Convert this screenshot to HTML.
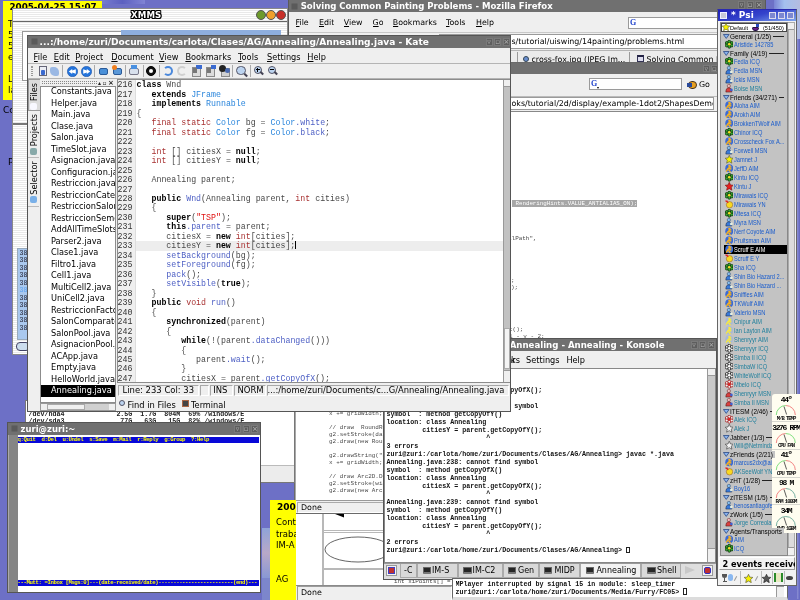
<!DOCTYPE html><html><head><meta charset="utf-8"><title>Desktop</title><style>
*{box-sizing:border-box;margin:0;padding:0}
html,body{width:800px;height:600px;overflow:hidden}
body{background:#6d70c6;position:relative;font-family:"DejaVu Sans","Liberation Sans",sans-serif;font-size:8.3px;color:#000}
.a{position:absolute;white-space:pre;overflow:hidden}
.win{position:absolute;overflow:hidden;background:#efefef;border:1px solid #5a5a5a}
.tb{position:absolute;left:0;right:0;top:0;background:#707070;color:#fff;font-weight:bold;white-space:pre;overflow:hidden}
.mono{font-family:"Liberation Mono","DejaVu Sans Mono",monospace}
.ui{font-family:"DejaVu Sans","Liberation Sans",sans-serif}
.psi{font-family:"Liberation Sans","DejaVu Sans",sans-serif}
u{text-decoration:underline}
.wb{position:absolute;width:7px;height:7px;background:#5c5c5c;border:1px solid #888;top:2px}
</style></head><body><div id="desk" style="position:absolute;left:0;top:0;width:800px;height:600px;overflow:hidden;will-change:transform">
<div class="a" style="left:774px;top:0;width:26px;height:9px;background:linear-gradient(90deg,#7a84d4,#a4c0ee 40%,#b4bce0)"></div>
<div class="a" style="left:797px;top:9px;width:3px;height:30px;background:#b0bce4"></div>
<div class="a" style="left:797px;top:39px;width:3px;height:560px;background:linear-gradient(90deg,#8c90d4,#6064c0)"></div>
<div class="a" style="left:100px;top:0;width:45px;height:4px;background:linear-gradient(90deg,#7a7ed0,#5c60c0,#8084d4)"></div>
<div class="a" style="left:3px;top:105px;font-size:9px">Co</div>
<div class="a" style="left:8px;top:157px;font-size:9px">P</div>
<div class="a" style="left:3px;top:1px;width:99px;height:99px;background:#ffff00">
<div class="a" style="left:6.4px;top:1.2px;font-size:8.8px;font-weight:bold;line-height:11px">2005-04-25 15:07</div>
<div class="a" style="left:5px;top:18px;font-size:9px;line-height:11px">T</div>
<div class="a" style="left:5px;top:29px;font-size:9px;line-height:11px">5</div>
<div class="a" style="left:5px;top:40px;font-size:9px;line-height:11px">5</div>
<div class="a" style="left:5px;top:51px;font-size:9px;line-height:11px">e</div>
<div class="a" style="left:5px;top:62px;font-size:9px;line-height:11px"></div>
<div class="a" style="left:5px;top:73px;font-size:9px;line-height:11px">L</div>
<div class="a" style="left:5px;top:84px;font-size:9px;line-height:11px">la</div>
</div>
<div class="a" style="left:12px;top:8px;width:276px;height:347px;border:1px solid #8a8a8a;background:repeating-linear-gradient(#fff 0,#fff 1px,#e9e9e9 1px,#e9e9e9 2px)">
<div class="a" style="left:0;top:12px;width:276px;height:1px;background:#666"></div>
<div class="a" style="left:0;top:114px;width:276px;height:2px;background:#777"></div>
<div class="a" style="left:118px;top:-0.5px;font-size:8.6px;font-weight:bold;color:#fff;text-shadow:-1px 0 #000,1px 0 #000,0 -1px #000,0 1px #000,1px 1px #000,-1px -1px #000,1px -1px #000,-1px 1px #000;line-height:12px;letter-spacing:0.1px;overflow:visible">XMMS</div>
<div class="a" style="left:243px;top:1px;width:10px;height:10px;border-radius:5px;background:#6d9a2b;border:1px solid #555"></div>
<div class="a" style="left:253px;top:1px;width:10px;height:10px;border-radius:5px;background:#f0a02c;border:1px solid #555"></div>
<div class="a" style="left:263px;top:1px;width:10px;height:10px;border-radius:5px;background:#c8302a;border:1px solid #555"></div>
<div class="a" style="left:9px;top:22px;width:100px;height:50px;background:#fff;border:1px solid #999"></div>
<div class="a" style="left:108px;top:21px;width:160px;height:60px;background:#8eaede"></div>
<div class="a" style="left:4px;top:238.5px;width:80px;height:92px;background:#a9c8ee;border:1px solid #9ab"></div>
<div class="a mono" style="left:6.5px;top:240.5px;font-size:6.6px;line-height:7.5px;color:#223">38:</div>
<div class="a mono" style="left:6.5px;top:248.0px;font-size:6.6px;line-height:7.5px;color:#223">38:</div>
<div class="a mono" style="left:6.5px;top:255.5px;font-size:6.6px;line-height:7.5px;color:#223">38:</div>
<div class="a mono" style="left:6.5px;top:263.0px;font-size:6.6px;line-height:7.5px;color:#223">38:</div>
<div class="a mono" style="left:6.5px;top:270.5px;font-size:6.6px;line-height:7.5px;color:#223">38:</div>
<div class="a mono" style="left:6.5px;top:278.0px;font-size:6.6px;line-height:7.5px;color:#5aa0f0">38:</div>
<div class="a mono" style="left:6.5px;top:285.5px;font-size:6.6px;line-height:7.5px;color:#223">38:</div>
<div class="a mono" style="left:6.5px;top:293.0px;font-size:6.6px;line-height:7.5px;color:#223">38:</div>
<div class="a mono" style="left:6.5px;top:300.5px;font-size:6.6px;line-height:7.5px;color:#223">38:</div>
<div class="a mono" style="left:6.5px;top:308.0px;font-size:6.6px;line-height:7.5px;color:#223">38:</div>
<div class="a mono" style="left:6.5px;top:315.5px;font-size:6.6px;line-height:7.5px;color:#223">38:</div>
<div class="a" style="left:3px;top:333px;width:14px;height:8.5px;border:1px solid #446;border-radius:4px;background:#cde"></div>
</div>
<div class="win" style="left:288px;top:0;width:478px;height:120px;border-top:none">
<div class="tb" style="height:12px;font-size:8.55px;line-height:12px"><div class="a" style="left:2px;top:3px;width:7px;height:7px;background:#5a5a5a;border:1px solid #646464;border-radius:1.5px"></div><span style="position:absolute;left:11.7px;top:-0.5px">Solving Common Painting Problems - Mozilla Firefox</span><div class="a" style="left:466.0px;top:1px;width:7px;height:8px;background:#5e5e5e;border:1px solid #7a7a7a;color:#b8b8b8;font-size:7px;line-height:6px;text-align:center;font-weight:normal">×</div><div class="a" style="left:457.5px;top:1px;width:7px;height:8px;background:#5e5e5e;border:1px solid #7a7a7a;color:#b8b8b8;font-size:7px;line-height:6px;text-align:center;font-weight:normal">▫</div><div class="a" style="left:449.0px;top:1px;width:7px;height:8px;background:#5e5e5e;border:1px solid #7a7a7a;color:#b8b8b8;font-size:7px;line-height:6px;text-align:center;font-weight:normal">▿</div></div>
<div class="a" style="left:6.5px;top:17px;font-size:7.9px;line-height:11px"><u>F</u>ile</div>
<div class="a" style="left:30px;top:17px;font-size:7.9px;line-height:11px"><u>E</u>dit</div>
<div class="a" style="left:54.80000000000001px;top:17px;font-size:7.9px;line-height:11px"><u>V</u>iew</div>
<div class="a" style="left:83.5px;top:17px;font-size:7.9px;line-height:11px"><u>G</u>o</div>
<div class="a" style="left:103.80000000000001px;top:17px;font-size:7.9px;line-height:11px"><u>B</u>ookmarks</div>
<div class="a" style="left:157px;top:17px;font-size:7.9px;line-height:11px"><u>T</u>ools</div>
<div class="a" style="left:187px;top:17px;font-size:7.9px;line-height:11px"><u>H</u>elp</div>
<div class="a" style="left:339px;top:16.5px;width:110px;height:12px;background:#fff;border:1px solid #9a9a9a"></div>
<div class="a" style="left:341px;top:18px;font-size:8px;line-height:9px;color:#2244cc;font-weight:bold;font-family:'Liberation Serif',serif">G</div>
<div class="a" style="left:0;top:32px;width:478px;height:1px;background:#c8c8c8"></div>
<div class="a" style="left:150px;top:34px;width:320px;height:15px;background:#fff;border:1px solid #9a9a9a"></div>
<div class="a" style="left:222.5px;top:36px;font-size:7.9px;line-height:12px">s/tutorial/uiswing/14painting/problems.html</div>
<div class="a" style="left:0;top:50px;width:478px;height:13px;background:#ebebeb;border-top:1px solid #b4b4b4"></div>
<div class="a" style="left:227.5px;top:52px;width:1px;height:11px;background:#999"></div>
<div class="a" style="left:234px;top:55.5px;width:6px;height:6px;border-radius:3px;background:#6a8fd0;border:1px solid #345"></div>
<div class="a" style="left:242.5px;top:53.7px;font-size:7.9px;line-height:12px">cross-fox.jpg (JPEG Im...</div>
<div class="a" style="left:340px;top:52px;width:1px;height:11px;background:#999"></div>
<div class="a" style="left:348px;top:54.5px;width:7px;height:7px;background:#dde;border:1px solid #335;border-top:2px solid #224"></div>
<div class="a" style="left:357.5px;top:53.7px;font-size:7.9px;line-height:12px">Solving Common Painting Problems</div>
</div>
<div class="a" style="left:294px;top:500px;width:160px;height:100px;background:#fff;border-left:2px solid #6c6c6c"><div class="a" style="left:-1px;top:0;width:1px;height:100px;background:#a8a8a8"></div>
<div class="a" style="left:25.5px;top:13px;width:2.4px;height:72px;border-left:1px solid #b8b8b8;border-right:1px solid #b8b8b8"></div>
<div class="a" style="left:27px;top:30px;width:70px;height:2.6px;border-top:1px solid #b8b8b8;border-bottom:1px solid #b8b8b8"></div>
<div class="a" style="left:27px;top:67.5px;width:70px;height:2.6px;border-top:1px solid #b8b8b8;border-bottom:1px solid #b8b8b8"></div>
<svg class="a" style="left:27.5px;top:13px" width="70" height="60" viewBox="0 0 70 60"><polygon points="8.5,0 20,0 20,4.5" fill="#000"/><ellipse cx="34" cy="36.5" rx="33" ry="12.5" fill="#fff" stroke="#222" stroke-width="0.7"/></svg>
<div class="a mono" style="left:98px;top:77.5px;font-size:5.9px;line-height:7px;color:#444">int xiPoints[] = {</div>
<div class="a" style="left:0;top:84.5px;width:160px;height:16px;background:#efefef;border-top:1px solid #8a8a8a"></div>
<div class="a" style="left:0.5px;top:86px;width:155.5px;height:15px;border:1px solid #9c9c9c;border-right-color:#fff"></div>
<div class="a" style="left:5px;top:87px;font-size:7.9px;line-height:12px">Done</div>
</div>
<div class="win" style="left:294px;top:62px;width:440px;height:452px;border-color:#6a6a6a">
<div class="tb" style="height:11px"><div class="a" style="left:424.0px;top:1.5px;width:6.5px;height:7.5px;background:#5e5e5e;border:1px solid #7a7a7a;color:#b8b8b8;font-size:7px;line-height:6px;text-align:center;font-weight:normal">×</div><div class="a" style="left:416.0px;top:1.5px;width:6.5px;height:7.5px;background:#5e5e5e;border:1px solid #7a7a7a;color:#b8b8b8;font-size:7px;line-height:6px;text-align:center;font-weight:normal">▫</div><div class="a" style="left:408.0px;top:1.5px;width:6.5px;height:7.5px;background:#5e5e5e;border:1px solid #7a7a7a;color:#b8b8b8;font-size:7px;line-height:6px;text-align:center;font-weight:normal">▿</div></div>
<div class="a" style="left:294px;top:14.7px;width:93px;height:12px;background:#fff;border:1px solid #9a9a9a"></div>
<div class="a" style="left:296px;top:15.7px;font-size:8px;line-height:10px;color:#2244cc;font-weight:bold;font-family:'Liberation Serif',serif">G</div>
<div class="a" style="left:393px;top:17.5px;width:9px;height:8px;border-radius:4px;background:#e8a020;border:1px solid #432"></div><div class="a" style="left:392px;top:19.5px;width:5px;height:4px;background:#2a4a9a"></div><div class="a" style="left:301.5px;top:24px;width:0;height:0;border-top:2px solid #000;border-left:1.5px solid transparent;border-right:1.5px solid transparent"></div>
<div class="a" style="left:404px;top:15px;font-size:7.9px;line-height:13px">Go</div>
<div class="a" style="left:0;top:33px;width:440px;height:1px;background:#bbb"></div>
<div class="a" style="left:150px;top:33.6px;width:269px;height:13px;background:#fff;border:1px solid #9a9a9a"></div>
<div class="a" style="left:216.5px;top:34.5px;width:201px;font-size:7.9px;line-height:12px">oks/tutorial/2d/display/example-1dot2/ShapesDemo2D.java</div>
<div class="a" style="left:0;top:48px;width:440px;height:1px;background:#888"></div>
<div class="a" style="left:1px;top:49px;width:421px;height:389px;background:#fff"></div>
<div class="a mono" style="left:217px;top:136.5px;font-size:5.8px;line-height:7.5px;background:#a6a6a6;color:#fff"> RenderingHints.VALUE_ANTIALIAS_ON);</div>
<div class="a mono" style="left:213px;top:171.5px;font-size:5.95px;line-height:7px;color:#4a4a4a">alPath",</div>
<div class="a mono" style="left:216px;top:213.5px;font-size:5.95px;line-height:7px;color:#4a4a4a">;</div>
<div class="a mono" style="left:216px;top:220.5px;font-size:5.95px;line-height:7px;color:#4a4a4a">);</div>
<div class="a mono" style="left:214px;top:262.5px;font-size:5.95px;line-height:7px;color:#4a4a4a">t();</div>
<div class="a mono" style="left:214px;top:269.5px;font-size:5.95px;line-height:7px;color:#4a4a4a">1 - y - 2;</div>
<div class="a mono" style="left:34px;top:346.5px;font-size:5.95px;line-height:7px;color:#4a4a4a">x += gridWidth;</div>
<div class="a mono" style="left:34px;top:360.5px;font-size:5.95px;line-height:7px;color:#4a4a4a">// draw  RoundRectangle2D</div>
<div class="a mono" style="left:34px;top:367.5px;font-size:5.95px;line-height:7px;color:#4a4a4a">g2.setStroke(dashed);</div>
<div class="a mono" style="left:34px;top:374.5px;font-size:5.95px;line-height:7px;color:#4a4a4a">g2.draw(new RoundRectangle2D</div>
<div class="a mono" style="left:34px;top:388.5px;font-size:5.95px;line-height:7px;color:#4a4a4a">g2.drawString("RoundRectangle2D"</div>
<div class="a mono" style="left:34px;top:395.5px;font-size:5.95px;line-height:7px;color:#4a4a4a">x += gridWidth;</div>
<div class="a mono" style="left:34px;top:409.5px;font-size:5.95px;line-height:7px;color:#4a4a4a">// draw Arc2D.Double</div>
<div class="a mono" style="left:34px;top:416.5px;font-size:5.95px;line-height:7px;color:#4a4a4a">g2.setStroke(wideStroke);</div>
<div class="a mono" style="left:34px;top:423.5px;font-size:5.95px;line-height:7px;color:#4a4a4a">g2.draw(new Arc2D.Double</div>
<div class="a" style="left:0;top:437px;width:440px;height:14px;background:#efefef;border-top:1px solid #999"></div>
<div class="a" style="left:2px;top:439px;width:160px;height:11px;border:1px solid #aaa;border-right-color:#fff;border-bottom-color:#fff"></div>
<div class="a" style="left:6px;top:438.5px;font-size:7.9px;line-height:12px">Done</div>
<div class="a" style="left:0;top:0;width:1px;height:452px;background:#a8a8a8"></div>
</div>
<div class="a" style="left:25px;top:400px;width:270px;height:83px;background:#fff;border:1px solid #777">
<div class="a mono" style="left:2.5px;top:9.6px;font-size:6.67px;line-height:7.5px;color:#222;font-weight:bold">/dev/hda4             2.5G  1.7G  804M  69% /windows/E
/dev/sda3              77G   63G   15G  82% /windows/F</div>
<div class="a" style="left:0;top:64px;width:270px;height:18px;background:#ececec;border-top:1px solid #bbb"></div>
</div>
<div class="a" style="left:270px;top:500px;width:26px;height:100px;background:#ffff00">
<div class="a" style="left:7px;top:2.3px;font-size:9px;font-weight:bold;line-height:11px">2005</div>
<div class="a" style="left:6px;top:17.3px;font-size:8.5px;line-height:11px">Cont</div>
<div class="a" style="left:6px;top:28.55px;font-size:8.5px;line-height:11px">traba</div>
<div class="a" style="left:6px;top:39.8px;font-size:8.5px;line-height:11px">IM-A</div>
<div class="a" style="left:6px;top:51.05px;font-size:8.5px;line-height:11px"></div>
<div class="a" style="left:6px;top:62.3px;font-size:8.5px;line-height:11px"></div>
<div class="a" style="left:6px;top:73.55px;font-size:8.5px;line-height:11px">AG</div>
</div>
<div class="a" style="left:262px;top:528px;width:8px;height:50px;background:linear-gradient(#8fa4d8,#b8a8c8,#8898d4)"></div>
<div class="a" style="left:262px;top:578px;width:8px;height:22px;background:#7c86cc"></div>
<div class="win" style="left:383px;top:338px;width:334px;height:242px;border-color:#555">
<div class="tb" style="height:12px;font-size:8.6px;line-height:12px"><span style="position:absolute;right:51.5px;top:-0.3px">zuri@zuri:/carlota/home/zuri/Documents/Clases/AG/Annealing - Annealing - Konsole</span><div class="a" style="left:323.5px;top:2px;width:7px;height:8px;background:#5e5e5e;border:1px solid #7a7a7a;color:#b8b8b8;font-size:7px;line-height:6px;text-align:center;font-weight:normal">×</div><div class="a" style="left:315.0px;top:2px;width:7px;height:8px;background:#5e5e5e;border:1px solid #7a7a7a;color:#b8b8b8;font-size:7px;line-height:6px;text-align:center;font-weight:normal">▫</div><div class="a" style="left:306.5px;top:2px;width:7px;height:8px;background:#5e5e5e;border:1px solid #7a7a7a;color:#b8b8b8;font-size:7px;line-height:6px;text-align:center;font-weight:normal">▿</div></div>
<div class="a" style="left:127px;top:14.5px;font-size:8.2px;line-height:12px">ks</div>
<div class="a" style="left:142px;top:14.5px;font-size:8.2px;line-height:12px">Settings</div>
<div class="a" style="left:182.39999999999998px;top:14.5px;font-size:8.2px;line-height:12px">Help</div>
<div class="a" style="left:5px;top:14.5px;font-size:8.2px;line-height:12px">Session   Edit   View   Bookmar</div>
<div class="a" style="left:0;top:29px;width:332px;height:195px;background:#fff;border:1px solid #888"></div>
<div class="a" style="left:323px;top:30px;width:8px;height:193px;background:#c8c8c8;border-left:1px solid #999"></div>
<div class="a" style="left:324px;top:30px;width:7px;height:7px;background:#efefef;border-bottom:1px solid #999"></div>
<div class="a" style="left:324px;top:209px;width:7px;height:14px;background:#efefef;border-top:1px solid #999"></div>
<div class="a mono" style="left:2.3999999999999773px;top:47.19999999999999px;width:318px;font-size:6.67px;line-height:8px;font-weight:bold;color:#111">         citiesX = parent.getCopyOfX();
                         ^
Annealing.java:239: cannot find symbol
symbol  : method getCopyOfY()
location: class Annealing
         citiesY = parent.getCopyOfY();
                         ^
3 errors
zuri@zuri:/carlota/home/zuri/Documents/Clases/AG/Annealing&gt; javac *.java
Annealing.java:238: cannot find symbol
symbol  : method getCopyOfX()
location: class Annealing
         citiesX = parent.getCopyOfX();
                         ^
Annealing.java:239: cannot find symbol
symbol  : method getCopyOfY()
location: class Annealing
         citiesY = parent.getCopyOfY();
                         ^
2 errors
zuri@zuri:/carlota/home/zuri/Documents/Clases/AG/Annealing&gt; <span style="display:inline-block;width:3.5px;height:6.5px;border:1px solid #222;vertical-align:-1px"></span></div>
<div class="a" style="left:0;top:224px;width:332px;height:17px;background:#dedede;border-top:1px solid #999"></div>
<div class="a" style="left:2px;top:226px;width:11px;height:11px;background:#f4f4f4;border:1px solid #999"></div><div class="a" style="left:4px;top:228px;width:7px;height:7px;background:#c03030;border:1px solid #4040c0"></div>
<div class="a" style="left:16px;top:224.5px;width:17px;height:14.5px;background:#d9d9d9;border:1px solid #aaa;border-top:none"></div>
<div class="a" style="left:20px;top:226.29999999999995px;font-size:8px;line-height:12px">-C</div>
<div class="a" style="left:33px;top:224.5px;width:41px;height:14.5px;background:#d9d9d9;border:1px solid #aaa;border-top:none"></div>
<div class="a" style="left:38.5px;top:228px;width:8.5px;height:7px;background:#262626;border:1px solid #666;border-bottom:2px solid #777;border-radius:1px"></div>
<div class="a" style="left:48px;top:226.29999999999995px;font-size:8px;line-height:12px">IM-S</div>
<div class="a" style="left:74px;top:224.5px;width:45px;height:14.5px;background:#d9d9d9;border:1px solid #aaa;border-top:none"></div>
<div class="a" style="left:79px;top:228px;width:8.5px;height:7px;background:#262626;border:1px solid #666;border-bottom:2px solid #777;border-radius:1px"></div>
<div class="a" style="left:88.60000000000002px;top:226.29999999999995px;font-size:8px;line-height:12px">IM-C2</div>
<div class="a" style="left:119px;top:224.5px;width:36px;height:14.5px;background:#d9d9d9;border:1px solid #aaa;border-top:none"></div>
<div class="a" style="left:123.5px;top:228px;width:8.5px;height:7px;background:#262626;border:1px solid #666;border-bottom:2px solid #777;border-radius:1px"></div>
<div class="a" style="left:134px;top:226.29999999999995px;font-size:8px;line-height:12px">Gen</div>
<div class="a" style="left:155px;top:224.5px;width:41px;height:14.5px;background:#d9d9d9;border:1px solid #aaa;border-top:none"></div>
<div class="a" style="left:159.60000000000002px;top:228px;width:8.5px;height:7px;background:#262626;border:1px solid #666;border-bottom:2px solid #777;border-radius:1px"></div>
<div class="a" style="left:170.39999999999998px;top:226.29999999999995px;font-size:8px;line-height:12px">MIDP</div>
<div class="a" style="left:196px;top:224.5px;width:61px;height:14.5px;background:#f2f2f2;border:1px solid #aaa;border-top:none"></div>
<div class="a" style="left:201.5px;top:228px;width:8.5px;height:7px;background:#262626;border:1px solid #666;border-bottom:2px solid #777;border-radius:1px"></div>
<div class="a" style="left:212.39999999999998px;top:226.29999999999995px;font-size:8px;line-height:12px">Annealing</div>
<div class="a" style="left:257px;top:224.5px;width:40px;height:14.5px;background:#d9d9d9;border:1px solid #aaa;border-top:none"></div>
<div class="a" style="left:263px;top:228px;width:8.5px;height:7px;background:#262626;border:1px solid #666;border-bottom:2px solid #777;border-radius:1px"></div>
<div class="a" style="left:273px;top:226.29999999999995px;font-size:8px;line-height:12px">Shell</div>
<div class="a" style="left:301px;top:227px;width:0;height:0;border-left:10px solid #c8c8c8;border-top:4.5px solid transparent;border-bottom:4.5px solid transparent"></div>
<div class="a" style="left:318px;top:225.5px;width:11px;height:11px;background:#f4f4f4;border:1px solid #999"></div><div class="a" style="left:320px;top:227.5px;width:7px;height:7px;background:#c03030;border:1px solid #3030c0;border-radius:2px"></div>
</div>
<div class="win" style="left:27px;top:35px;width:484px;height:377px;border-color:#555">
<div class="tb" style="height:12px;font-size:9.07px;line-height:12px"><div class="a" style="left:3px;top:2px;width:7px;height:7px;background:#5a5a5a;border:1px solid #646464;border-radius:1.5px"></div><span style="position:absolute;left:11.6px;top:0.2px">...:/home/zuri/Documents/carlota/Clases/AG/Annealing/Annealing.java - Kate</span><div class="a" style="left:474.5px;top:2px;width:7px;height:8px;background:#5e5e5e;border:1px solid #7a7a7a;color:#b8b8b8;font-size:7px;line-height:6px;text-align:center;font-weight:normal">×</div><div class="a" style="left:466.0px;top:2px;width:7px;height:8px;background:#5e5e5e;border:1px solid #7a7a7a;color:#b8b8b8;font-size:7px;line-height:6px;text-align:center;font-weight:normal">▫</div><div class="a" style="left:457.5px;top:2px;width:7px;height:8px;background:#5e5e5e;border:1px solid #7a7a7a;color:#b8b8b8;font-size:7px;line-height:6px;text-align:center;font-weight:normal">▿</div></div>
<div class="a" style="left:5.600000000000001px;top:14.700000000000003px;font-size:8.2px;line-height:12px"><u>F</u>ile</div>
<div class="a" style="left:25.799999999999997px;top:14.700000000000003px;font-size:8.2px;line-height:12px"><u>E</u>dit</div>
<div class="a" style="left:47.2px;top:14.700000000000003px;font-size:8.2px;line-height:12px"><u>P</u>roject</div>
<div class="a" style="left:83.3px;top:14.700000000000003px;font-size:8.2px;line-height:12px"><u>D</u>ocument</div>
<div class="a" style="left:131px;top:14.700000000000003px;font-size:8.2px;line-height:12px"><u>V</u>iew</div>
<div class="a" style="left:157.4px;top:14.700000000000003px;font-size:8.2px;line-height:12px"><u>B</u>ookmarks</div>
<div class="a" style="left:210px;top:14.700000000000003px;font-size:8.2px;line-height:12px"><u>T</u>ools</div>
<div class="a" style="left:239px;top:14.700000000000003px;font-size:8.2px;line-height:12px"><u>S</u>ettings</div>
<div class="a" style="left:279.3px;top:14.700000000000003px;font-size:8.2px;line-height:12px"><u>H</u>elp</div>
<div class="a" style="left:0;top:27px;width:484px;height:1px;background:#b4b4b4"></div>
<div class="a" style="left:0;top:42px;width:484px;height:1px;background:#b4b4b4"></div>
<div class="a" style="left:3px;top:30px;width:2px;height:10px;border-left:1px dotted #999;border-right:1px dotted #999"></div>
<div class="a" style="left:33.5px;top:29px;width:1px;height:12px;background:#aaa"></div>
<div class="a" style="left:66px;top:29px;width:1px;height:12px;background:#aaa"></div>
<div class="a" style="left:97px;top:29px;width:1px;height:12px;background:#aaa"></div>
<div class="a" style="left:114.5px;top:29px;width:1px;height:12px;background:#aaa"></div>
<div class="a" style="left:131px;top:29px;width:1px;height:12px;background:#aaa"></div>
<div class="a" style="left:204px;top:29px;width:1px;height:12px;background:#aaa"></div>
<div class="a" style="left:222px;top:29px;width:1px;height:12px;background:#aaa"></div>
<div class="a" style="left:10.5px;top:30px;width:8px;height:10px;background:#eceef4;border:1px solid #667"></div>
<div class="a" style="left:12.5px;top:33.5px;width:4.5px;height:5px;background:#3a6ad0;border-radius:1px"></div>
<div class="a" style="left:21.5px;top:31px;width:9px;height:9px;background:#9ab8e4;border-radius:2px 5px 2px 5px"></div>
<svg class="a" style="left:38.5px;top:29.5px" width="11" height="11" viewBox="0 0 11 11"><circle cx="5.5" cy="5.5" r="5.2" fill="#2474dc" stroke="#1a4a9a" stroke-width="0.5"/><polygon points="1.8,5.5 5.2,3 5.2,4.4 8.8,3.2 8.8,7.8 5.2,6.6 5.2,8" fill="#fff"/></svg>
<svg class="a" style="left:52.5px;top:29.5px" width="11" height="11" viewBox="0 0 11 11"><circle cx="5.5" cy="5.5" r="5.2" fill="#2474dc" stroke="#1a4a9a" stroke-width="0.5"/><polygon points="9.2,5.5 5.8,3 5.8,4.4 2.2,3.2 2.2,7.8 5.8,6.6 5.8,8" fill="#fff"/></svg>
<div class="a" style="left:70.5px;top:32px;width:9px;height:7px;background:#4a90d8;border-radius:2px;border:1px solid #2a5a98"></div>
<div class="a" style="left:84.5px;top:32px;width:9px;height:7px;background:#5a98d8;border-radius:2px;border:1px solid #2a5a98"></div><div class="a" style="left:84px;top:29px;width:5px;height:5px;background:#f08020;border-radius:3px"></div>
<div class="a" style="left:101px;top:32px;width:10px;height:7px;background:#d8e0ec;border:1px solid #778;border-radius:2px"></div><div class="a" style="left:103px;top:29px;width:6px;height:4px;background:#4a90e0"></div>
<div class="a" style="left:118px;top:30px;width:10px;height:10px;border-radius:5.0px;background:#111;border:1px solid #000"></div>
<div class="a" style="left:121px;top:33px;width:4px;height:4px;background:#fff;border-radius:2px"></div>
<div class="a" style="left:134.5px;top:29.5px;width:10.5px;height:10.5px;border-radius:5.5px;border:2px solid #4a88dc;border-left-color:transparent"></div>
<div class="a" style="left:149px;top:29.5px;width:10px;height:10.5px;border-radius:5.5px;border:2px solid #d0d0d0;border-right-color:transparent"></div>
<div class="a" style="left:163.5px;top:30.5px;width:9px;height:10px;background:#dcdcdc;border:1px solid #8a8a8a"></div><div class="a" style="left:168.0px;top:29px;width:5.5px;height:3.5px;background:#3a6ad0"></div><div class="a" style="left:164.5px;top:31.5px;width:4px;height:5px;background:#777"></div>
<div class="a" style="left:178px;top:30.5px;width:9px;height:10px;background:#dcdcdc;border:1px solid #8a8a8a"></div><div class="a" style="left:182.5px;top:29px;width:5.5px;height:3.5px;background:#3a6ad0"></div><div class="a" style="left:179px;top:31.5px;width:4px;height:5px;background:#777"></div>
<div class="a" style="left:193px;top:31.5px;width:9px;height:9px;background:#d0d0d0;border:1px solid #888"></div><div class="a" style="left:191px;top:29px;width:6.5px;height:6.5px;background:#222;border-radius:3.5px"></div><div class="a" style="left:197px;top:32px;width:5px;height:5px;background:#4a6ab0;border-radius:2.5px"></div>
<div class="a" style="left:208px;top:29.5px;width:9.5px;height:9.5px;border-radius:4.75px;background:#bcd4f0;border:1px solid #556"></div><div class="a" style="left:215.5px;top:37.5px;width:3.5px;height:1.6px;background:#445;transform:rotate(45deg)"></div>
<div class="a" style="left:225.5px;top:29.5px;width:8px;height:8px;border-radius:4.0px;background:#bcd4f0;border:1px solid #556"></div><div class="a" style="left:231.5px;top:36.0px;width:3.5px;height:1.6px;background:#445;transform:rotate(45deg)"></div>
<div class="a" style="left:240px;top:29.5px;width:8px;height:8px;border-radius:4.0px;background:#bcd4f0;border:1px solid #556"></div><div class="a" style="left:246px;top:36.0px;width:3.5px;height:1.6px;background:#445;transform:rotate(45deg)"></div>
<div class="a" style="left:227.5px;top:33px;width:4px;height:1px;background:#000"></div><div class="a" style="left:229px;top:31.5px;width:1px;height:4px;background:#000"></div>
<div class="a" style="left:242px;top:33px;width:4px;height:1px;background:#000"></div>
<div class="a" style="left:0;top:43px;width:12px;height:32px;background:#dcdcdc;border:1px solid #999;border-right:none"></div>
<div class="a" style="left:0px;top:25.5px;width:12px;height:60px;overflow:visible"><div style="position:absolute;left:6px;top:30px;transform:translate(-50%,-50%) rotate(-90deg);font-size:8.2px;line-height:10px;white-space:pre">Files</div></div>
<div class="a" style="left:2px;top:66.5px;width:7px;height:7px;background:#f8f8ff;border-radius:2px"></div>
<div class="a" style="left:0px;top:64px;width:12px;height:60px;overflow:visible"><div style="position:absolute;left:6px;top:30px;transform:translate(-50%,-50%) rotate(-90deg);font-size:8.2px;line-height:10px;white-space:pre">Projects</div></div>
<div class="a" style="left:2px;top:111.5px;width:7px;height:7px;background:#8aa;border-radius:2px"></div>
<div class="a" style="left:0px;top:111.5px;width:12px;height:60px;overflow:visible"><div style="position:absolute;left:6px;top:30px;transform:translate(-50%,-50%) rotate(-90deg);font-size:8.2px;line-height:10px;white-space:pre">Selector</div></div>
<div class="a" style="left:2px;top:160px;width:7px;height:7px;background:#7ab0e8;border-radius:2px"></div>
<div class="a" style="left:11.5px;top:75px;width:1px;height:300px;background:#aaa"></div>
<div class="a" style="left:0px;top:121px;width:11px;height:1px;background:#bbb"></div>
<div class="a" style="left:0px;top:170px;width:11px;height:1px;background:#bbb"></div>
<div class="a" style="left:14px;top:44.5px;width:55px;height:3px;border-top:1px dotted #888;border-bottom:1px dotted #888"></div>
<div class="a" style="left:70px;top:42.5px;font-size:6px;line-height:7px;color:#222;letter-spacing:1.5px">▴▫<b style="font-size:7px">×</b></div>
<div class="a" style="left:12px;top:50px;width:76px;height:317px;background:#fff;border:1px solid #8c8c8c"></div>
<div class="a" style="left:13px;top:50.0px;width:74px;height:11.5px;padding-left:10px;font-size:8.2px;line-height:11.5px">Constants.java</div>
<div class="a" style="left:13px;top:61.5px;width:74px;height:11.5px;padding-left:10px;font-size:8.2px;line-height:11.5px">Helper.java</div>
<div class="a" style="left:13px;top:73.0px;width:74px;height:11.5px;padding-left:10px;font-size:8.2px;line-height:11.5px">Main.java</div>
<div class="a" style="left:13px;top:84.5px;width:74px;height:11.5px;padding-left:10px;font-size:8.2px;line-height:11.5px">Clase.java</div>
<div class="a" style="left:13px;top:96.0px;width:74px;height:11.5px;padding-left:10px;font-size:8.2px;line-height:11.5px">Salon.java</div>
<div class="a" style="left:13px;top:107.5px;width:74px;height:11.5px;padding-left:10px;font-size:8.2px;line-height:11.5px">TimeSlot.java</div>
<div class="a" style="left:13px;top:119.0px;width:74px;height:11.5px;padding-left:10px;font-size:8.2px;line-height:11.5px">Asignacion.java</div>
<div class="a" style="left:13px;top:130.5px;width:74px;height:11.5px;padding-left:10px;font-size:8.2px;line-height:11.5px">Configuracion.java</div>
<div class="a" style="left:13px;top:142.0px;width:74px;height:11.5px;padding-left:10px;font-size:8.2px;line-height:11.5px">Restriccion.java</div>
<div class="a" style="left:13px;top:153.5px;width:74px;height:11.5px;padding-left:10px;font-size:8.2px;line-height:11.5px">RestriccionCategoria.java</div>
<div class="a" style="left:13px;top:165.0px;width:74px;height:11.5px;padding-left:10px;font-size:8.2px;line-height:11.5px">RestriccionSalon.java</div>
<div class="a" style="left:13px;top:176.5px;width:74px;height:11.5px;padding-left:10px;font-size:8.2px;line-height:11.5px">RestriccionSemestre.java</div>
<div class="a" style="left:13px;top:188.0px;width:74px;height:11.5px;padding-left:10px;font-size:8.2px;line-height:11.5px">AddAllTimeSlots.java</div>
<div class="a" style="left:13px;top:199.5px;width:74px;height:11.5px;padding-left:10px;font-size:8.2px;line-height:11.5px">Parser2.java</div>
<div class="a" style="left:13px;top:211.0px;width:74px;height:11.5px;padding-left:10px;font-size:8.2px;line-height:11.5px">Clase1.java</div>
<div class="a" style="left:13px;top:222.5px;width:74px;height:11.5px;padding-left:10px;font-size:8.2px;line-height:11.5px">Filtro1.java</div>
<div class="a" style="left:13px;top:234.0px;width:74px;height:11.5px;padding-left:10px;font-size:8.2px;line-height:11.5px">Cell1.java</div>
<div class="a" style="left:13px;top:245.5px;width:74px;height:11.5px;padding-left:10px;font-size:8.2px;line-height:11.5px">MultiCell2.java</div>
<div class="a" style="left:13px;top:257.0px;width:74px;height:11.5px;padding-left:10px;font-size:8.2px;line-height:11.5px">UniCell2.java</div>
<div class="a" style="left:13px;top:268.5px;width:74px;height:11.5px;padding-left:10px;font-size:8.2px;line-height:11.5px">RestriccionFactory.java</div>
<div class="a" style="left:13px;top:280.0px;width:74px;height:11.5px;padding-left:10px;font-size:8.2px;line-height:11.5px">SalonComparator.java</div>
<div class="a" style="left:13px;top:291.5px;width:74px;height:11.5px;padding-left:10px;font-size:8.2px;line-height:11.5px">SalonPool.java</div>
<div class="a" style="left:13px;top:303.0px;width:74px;height:11.5px;padding-left:10px;font-size:8.2px;line-height:11.5px">AsignacionPool.java</div>
<div class="a" style="left:13px;top:314.5px;width:74px;height:11.5px;padding-left:10px;font-size:8.2px;line-height:11.5px">ACApp.java</div>
<div class="a" style="left:13px;top:326.0px;width:74px;height:11.5px;padding-left:10px;font-size:8.2px;line-height:11.5px">Empty.java</div>
<div class="a" style="left:13px;top:337.5px;width:74px;height:11.5px;padding-left:10px;font-size:8.2px;line-height:11.5px">HelloWorld.java</div>
<div class="a" style="left:13px;top:349.0px;width:74px;height:11.5px;background:#000;color:#fff;padding-left:10px;font-size:8.2px;line-height:11.5px">Annealing.java</div>
<div class="a" style="left:12px;top:367px;width:76px;height:8px;background:#d0d0d0;border:1px solid #999"></div>
<div class="a" style="left:19px;top:368px;width:38px;height:6px;background:#f0f0f0;border:1px solid #aaa"></div>
<div class="a" style="left:13px;top:368px;width:6px;height:6px;background:#efefef"></div><div class="a" style="left:81px;top:368px;width:6px;height:6px;background:#efefef"></div>
<div class="a" style="left:88.5px;top:43px;width:394px;height:304px;background:#fff;border:1px solid #8c8c8c"></div>
<div class="a" style="left:89.5px;top:44px;width:18px;height:302px;background:#efefef;border-right:1px solid #ddd"></div>
<div class="a" style="left:108px;top:205px;width:367px;height:9.5px;background:#ededed"></div>
<div class="a" style="left:475px;top:44px;width:7px;height:302px;background:#c2c2c2;border-left:1px solid #999"></div>
<div class="a" style="left:476px;top:44px;width:6px;height:7px;background:#efefef;border-bottom:1px solid #999"></div>
<div class="a" style="left:476px;top:292px;width:6px;height:41px;background:#f4f4f4;border:1px solid #aaa"></div>
<div class="a" style="left:476px;top:333.5px;width:6px;height:12.5px;background:#efefef;border-top:1px solid #999"></div>
<div class="a mono" style="left:89.5px;top:44.400000000000006px;width:385px;height:301.5px;font-size:8.27px;line-height:9.48px;white-space:normal">
<div style="height:9.48px;white-space:pre;overflow:hidden"><span style="color:#333">216</span><span style="display:inline-block;width:4.2px"></span><span style="color:#000;font-weight:bold">class</span><span style="color:#484848"> Wnd</span></div>
<div style="height:9.48px;white-space:pre;overflow:hidden"><span style="color:#333">217</span><span style="display:inline-block;width:4.2px"></span><span style="color:#484848">   </span><span style="color:#000;font-weight:bold">extends</span><span style="color:#2b86dc"> JFrame</span></div>
<div style="height:9.48px;white-space:pre;overflow:hidden"><span style="color:#333">218</span><span style="display:inline-block;width:4.2px"></span><span style="color:#484848">   </span><span style="color:#000;font-weight:bold">implements</span><span style="color:#2b86dc"> Runnable</span></div>
<div style="height:9.48px;white-space:pre;overflow:hidden"><span style="color:#333">219</span><span style="display:inline-block;width:4.2px"></span><span style="color:#484848">{</span></div>
<div style="height:9.48px;white-space:pre;overflow:hidden"><span style="color:#333">220</span><span style="display:inline-block;width:4.2px"></span><span style="color:#484848">   </span><span style="color:#a83232">final static</span><span style="color:#2b86dc"> Color</span><span style="color:#484848"> bg = </span><span style="color:#2b86dc">Color</span><span style="color:#4d5fc4">.white</span><span style="color:#484848">;</span></div>
<div style="height:9.48px;white-space:pre;overflow:hidden"><span style="color:#333">221</span><span style="display:inline-block;width:4.2px"></span><span style="color:#484848">   </span><span style="color:#a83232">final static</span><span style="color:#2b86dc"> Color</span><span style="color:#484848"> fg = </span><span style="color:#2b86dc">Color</span><span style="color:#4d5fc4">.black</span><span style="color:#484848">;</span></div>
<div style="height:9.48px;white-space:pre;overflow:hidden"><span style="color:#333">222</span><span style="display:inline-block;width:4.2px"></span></div>
<div style="height:9.48px;white-space:pre;overflow:hidden"><span style="color:#333">223</span><span style="display:inline-block;width:4.2px"></span><span style="color:#484848">   </span><span style="color:#a83232">int</span><span style="color:#484848"> [] citiesX = </span><span style="color:#000;font-weight:bold">null</span><span style="color:#484848">;</span></div>
<div style="height:9.48px;white-space:pre;overflow:hidden"><span style="color:#333">224</span><span style="display:inline-block;width:4.2px"></span><span style="color:#484848">   </span><span style="color:#a83232">int</span><span style="color:#484848"> [] citiesY = </span><span style="color:#000;font-weight:bold">null</span><span style="color:#484848">;</span></div>
<div style="height:9.48px;white-space:pre;overflow:hidden"><span style="color:#333">225</span><span style="display:inline-block;width:4.2px"></span></div>
<div style="height:9.48px;white-space:pre;overflow:hidden"><span style="color:#333">226</span><span style="display:inline-block;width:4.2px"></span><span style="color:#484848">   Annealing parent;</span></div>
<div style="height:9.48px;white-space:pre;overflow:hidden"><span style="color:#333">227</span><span style="display:inline-block;width:4.2px"></span></div>
<div style="height:9.48px;white-space:pre;overflow:hidden"><span style="color:#333">228</span><span style="display:inline-block;width:4.2px"></span><span style="color:#484848">   </span><span style="color:#000;font-weight:bold">public</span><span style="color:#4d5fc4"> Wnd</span><span style="color:#484848">(Annealing parent, </span><span style="color:#a83232">int</span><span style="color:#484848"> cities)</span></div>
<div style="height:9.48px;white-space:pre;overflow:hidden"><span style="color:#333">229</span><span style="display:inline-block;width:4.2px"></span><span style="color:#484848">   {</span></div>
<div style="height:9.48px;white-space:pre;overflow:hidden"><span style="color:#333">230</span><span style="display:inline-block;width:4.2px"></span><span style="color:#484848">      </span><span style="color:#000;font-weight:bold">super</span><span style="color:#484848">(</span><span style="color:#e01010">"TSP"</span><span style="color:#484848">);</span></div>
<div style="height:9.48px;white-space:pre;overflow:hidden"><span style="color:#333">231</span><span style="display:inline-block;width:4.2px"></span><span style="color:#484848">      </span><span style="color:#000;font-weight:bold">this</span><span style="color:#4d5fc4">.parent</span><span style="color:#484848"> = parent;</span></div>
<div style="height:9.48px;white-space:pre;overflow:hidden"><span style="color:#333">232</span><span style="display:inline-block;width:4.2px"></span><span style="color:#484848">      citiesX = </span><span style="color:#000;font-weight:bold">new</span><span style="color:#a83232"> int</span><span style="color:#484848">[cities];</span></div>
<div style="height:9.48px;white-space:pre;overflow:hidden"><span style="color:#333">233</span><span style="display:inline-block;width:4.2px"></span><span style="color:#484848">      citiesY = </span><span style="color:#000;font-weight:bold">new</span><span style="color:#a83232"> int</span><span style="color:#484848">[cities];</span><span style="display:inline-block;width:1px;height:8px;background:#000;vertical-align:-1px"></span></div>
<div style="height:9.48px;white-space:pre;overflow:hidden"><span style="color:#333">234</span><span style="display:inline-block;width:4.2px"></span><span style="color:#484848">      </span><span style="color:#4d5fc4">setBackground</span><span style="color:#484848">(bg);</span></div>
<div style="height:9.48px;white-space:pre;overflow:hidden"><span style="color:#333">235</span><span style="display:inline-block;width:4.2px"></span><span style="color:#484848">      </span><span style="color:#4d5fc4">setForeground</span><span style="color:#484848">(fg);</span></div>
<div style="height:9.48px;white-space:pre;overflow:hidden"><span style="color:#333">236</span><span style="display:inline-block;width:4.2px"></span><span style="color:#484848">      </span><span style="color:#4d5fc4">pack</span><span style="color:#484848">();</span></div>
<div style="height:9.48px;white-space:pre;overflow:hidden"><span style="color:#333">237</span><span style="display:inline-block;width:4.2px"></span><span style="color:#484848">      </span><span style="color:#4d5fc4">setVisible</span><span style="color:#484848">(</span><span style="color:#000;font-weight:bold">true</span><span style="color:#484848">);</span></div>
<div style="height:9.48px;white-space:pre;overflow:hidden"><span style="color:#333">238</span><span style="display:inline-block;width:4.2px"></span><span style="color:#484848">   }</span></div>
<div style="height:9.48px;white-space:pre;overflow:hidden"><span style="color:#333">239</span><span style="display:inline-block;width:4.2px"></span><span style="color:#484848">   </span><span style="color:#000;font-weight:bold">public</span><span style="color:#a83232"> void</span><span style="color:#4d5fc4"> run</span><span style="color:#484848">()</span></div>
<div style="height:9.48px;white-space:pre;overflow:hidden"><span style="color:#333">240</span><span style="display:inline-block;width:4.2px"></span><span style="color:#484848">   {</span></div>
<div style="height:9.48px;white-space:pre;overflow:hidden"><span style="color:#333">241</span><span style="display:inline-block;width:4.2px"></span><span style="color:#484848">      </span><span style="color:#000;font-weight:bold">synchronized</span><span style="color:#484848">(parent)</span></div>
<div style="height:9.48px;white-space:pre;overflow:hidden"><span style="color:#333">242</span><span style="display:inline-block;width:4.2px"></span><span style="color:#484848">      {</span></div>
<div style="height:9.48px;white-space:pre;overflow:hidden"><span style="color:#333">243</span><span style="display:inline-block;width:4.2px"></span><span style="color:#484848">         </span><span style="color:#000;font-weight:bold">while</span><span style="color:#484848">(!(parent</span><span style="color:#4d5fc4">.dataChanged</span><span style="color:#484848">()))</span></div>
<div style="height:9.48px;white-space:pre;overflow:hidden"><span style="color:#333">244</span><span style="display:inline-block;width:4.2px"></span><span style="color:#484848">         {</span></div>
<div style="height:9.48px;white-space:pre;overflow:hidden"><span style="color:#333">245</span><span style="display:inline-block;width:4.2px"></span><span style="color:#484848">            parent</span><span style="color:#4d5fc4">.wait</span><span style="color:#484848">();</span></div>
<div style="height:9.48px;white-space:pre;overflow:hidden"><span style="color:#333">246</span><span style="display:inline-block;width:4.2px"></span><span style="color:#484848">         }</span></div>
<div style="height:9.48px;white-space:pre;overflow:hidden"><span style="color:#333">247</span><span style="display:inline-block;width:4.2px"></span><span style="color:#484848">         citiesX = parent</span><span style="color:#4d5fc4">.getCopyOfX</span><span style="color:#484848">();</span></div>
</div>
<div class="a" style="left:90px;top:349px;width:80.5px;height:11px;border:1px solid #a8a8a8;border-right-color:#fff;border-bottom-color:#fff"></div>
<div class="a" style="left:94.5px;top:347.7px;font-size:8.45px;line-height:12px">Line: 233 Col: 33</div>
<div class="a" style="left:171.5px;top:349px;width:9.0px;height:11px;border:1px solid #a8a8a8;border-right-color:#fff;border-bottom-color:#fff"></div>
<div class="a" style="left:181.5px;top:349px;width:23.5px;height:11px;border:1px solid #a8a8a8;border-right-color:#fff;border-bottom-color:#fff"></div>
<div class="a" style="left:185.2px;top:347.7px;font-size:8.45px;line-height:12px">INS</div>
<div class="a" style="left:206px;top:349px;width:31.5px;height:11px;border:1px solid #a8a8a8;border-right-color:#fff;border-bottom-color:#fff"></div>
<div class="a" style="left:209.5px;top:347.7px;font-size:8.45px;line-height:12px">NORM</div>
<div class="a" style="left:238.5px;top:349px;width:242.5px;height:11px;border:1px solid #a8a8a8;border-right-color:#fff;border-bottom-color:#fff"></div>
<div class="a" style="left:239.5px;top:347.7px;font-size:8.36px;line-height:12px">...:/home/zuri/Documents/c...G/Annealing/Annealing.java</div>
<div class="a" style="left:90.5px;top:364px;width:6px;height:6px;border-radius:3px;background:#bcd4f0;border:1px solid #556"></div>
<div class="a" style="left:99.6px;top:362.5px;font-size:8.33px;line-height:12px">Find in Files</div>
<div class="a" style="left:154px;top:364px;width:7px;height:7px;background:#444;border:1px solid #a64"></div>
<div class="a" style="left:163px;top:362.5px;font-size:8.2px;line-height:12px">Terminal</div>
</div>
<div class="win" style="left:7px;top:422px;width:254px;height:171px;border-color:#555;background:#fff">
<div class="tb" style="height:12px;font-size:8.45px;line-height:12px"><div class="a" style="left:3px;top:2px;width:7px;height:7px;background:#5a5a5a;border:1px solid #646464;border-radius:1.5px"></div><span style="position:absolute;left:12.6px;top:0px">zuri@zuri:~</span><div class="a" style="left:243.0px;top:2px;width:7px;height:8px;background:#5e5e5e;border:1px solid #7a7a7a;color:#b8b8b8;font-size:7px;line-height:6px;text-align:center;font-weight:normal">×</div><div class="a" style="left:234.5px;top:2px;width:7px;height:8px;background:#5e5e5e;border:1px solid #7a7a7a;color:#b8b8b8;font-size:7px;line-height:6px;text-align:center;font-weight:normal">▫</div><div class="a" style="left:226.0px;top:2px;width:7px;height:8px;background:#5e5e5e;border:1px solid #7a7a7a;color:#b8b8b8;font-size:7px;line-height:6px;text-align:center;font-weight:normal">▿</div></div>
<div class="a" style="left:0;top:12px;width:9.5px;height:160px;background:#858585;border-left:1px solid #aaa"></div>
<div class="a mono" style="left:9.5px;top:13.5px;width:241.5px;height:6.5px;background:#0808d8;color:#ffff00;font-size:5.7px;letter-spacing:-0.42px;line-height:6.5px;font-weight:bold">q:Quit  d:Del  u:Undel  s:Save  m:Mail  r:Reply  g:Group  ?:Help</div>
<div class="a mono" style="left:9.5px;top:156.5px;width:241.5px;height:6.5px;background:#0808d8;color:#ffff00;font-size:5.7px;letter-spacing:-0.42px;line-height:6.5px;font-weight:bold">---Mutt: =Inbox [Msgs:0]---(date-received/date)-------------------------(end)---</div>
</div>
<div class="a" style="left:452px;top:578px;width:336px;height:22px;background:#fff;border:1px solid #666;border-bottom:3px solid #dcdcdc">
<div class="a mono" style="left:2.5px;top:0.5px;font-size:6.67px;line-height:8.3px;font-weight:bold;color:#111">MPlayer interrupted by signal 15 in module: sleep_timer
zuri@zuri:/carlota/home/zuri/Documents/Media/Furry/FC05> <span style="display:inline-block;width:3.5px;height:6.5px;border:1px solid #222;vertical-align:-1px"></span></div>
<div class="a" style="left:323px;top:0;width:8px;height:19px;background:#d4d4d4;border-left:1px solid #999;border-right:1px solid #999"></div>
<div class="a" style="left:324px;top:7px;width:7px;height:12px;background:#efefef;border-top:1px solid #999"></div>
</div>
<div class="a" style="left:717px;top:9px;width:80px;height:577px;background:#f2f2f2;border:1px solid #666;border-top-color:#2a2ab0">
<div class="a" style="left:0;top:0;width:78px;height:11px;background:linear-gradient(165deg,#1e1eb8 0%,#3444cc 50%,#80a8ee 100%)"></div>
<div class="a" style="left:2px;top:2px;width:7px;height:7px;background:#c8c8d8;border:1px solid #eef"></div>
<div class="a" style="left:13px;top:-1px;font-size:9px;line-height:12px;font-weight:bold;color:#fff">* Psi</div>
<div class="a" style="left:51px;top:2px;width:7px;height:7px;background:#7c88d0;border:1px solid #dde"></div>
<div class="a" style="left:60px;top:2px;width:7px;height:7px;background:#7c88d0;border:1px solid #dde"></div>
<div class="a" style="left:69px;top:2px;width:7px;height:7px;background:#7c88d0;border:1px solid #dde"></div>
<div class="a" style="left:2px;top:12px;width:68px;height:534px;background:#c3c3c3;border:1px solid #888"></div>
<div class="a" style="left:69.5px;top:12px;width:7.5px;height:534px;background:#dcdcdc;border:1px solid #aaa"></div>
<div class="a" style="left:70px;top:13px;width:6px;height:7px;background:#f0f0f0;border-bottom:1px solid #999"></div>
<div class="a" style="left:70px;top:537px;width:6px;height:8px;background:#f0f0f0;border-top:1px solid #999"></div>
<div class="a" style="left:2.5px;top:13px;width:66.5px;height:9px;background:#fff;border:1px solid #444"></div>
<svg class="a" style="left:3.5px;top:13.3px" width="8" height="8" viewBox="0 0 10 10"><polygon points="5,0.3 6.5,3.5 9.8,3.8 7.3,6.1 8.1,9.6 5,7.8 1.9,9.6 2.7,6.1 0.2,3.8 3.5,3.5" fill="#f6f000" stroke="#553" stroke-width="0.7"/></svg>
<div class="a psi" style="left:12px;top:13px;font-size:6.2px;line-height:9px;overflow:visible"><span style="display:inline-block;transform:scaleX(0.92);transform-origin:0 50%">Default</span></div>
<div class="a" style="left:34px;top:16.5px;width:7px;height:4.5px;background:#6a1a8a;border-radius:1px 1px 3px 3px;border:1px solid #214"></div><div class="a" style="left:38px;top:13.5px;width:3px;height:3px;background:#2a4ac0"></div>
<div class="a psi" style="left:45px;top:13px;font-size:6.2px;line-height:9px;overflow:visible"><span style="display:inline-block;transform:scaleX(0.9);transform-origin:0 50%">(51/450)</span></div>
<svg class="a" style="left:5px;top:24.299999999999997px" width="6.5" height="5" viewBox="0 0 6.5 5"><polygon points="0.4,0.5 6.1,0.5 3.25,4.4" fill="#8ab4ee" stroke="#1a3a7a" stroke-width="0.7"/></svg>
<div class="a psi" style="left:12px;top:21.5px;width:56px;font-size:6.4px;line-height:9px;color:#000"><span style="background:#c3c3c3;position:relative;z-index:1;padding-right:2px">General (1/25)</span><span style="position:absolute;left:0;right:2px;top:4.5px;height:1px;background:#222"></span></div>
<svg class="a" style="left:6.5px;top:30.299999999999997px" width="8.5" height="8.5" viewBox="0 0 10 10"><g fill="#39b030" stroke="#0a2a08" stroke-width="0.9"><circle cx="5" cy="2" r="1.7"/><circle cx="5" cy="8" r="1.7"/><circle cx="2" cy="3.5" r="1.7"/><circle cx="8" cy="3.5" r="1.7"/><circle cx="2" cy="6.5" r="1.7"/><circle cx="8" cy="6.5" r="1.7"/></g><circle cx="5" cy="5" r="1.5" fill="#f4e020"/></svg>
<div class="a psi" style="left:16px;top:30.0px;width:52.5px;font-size:6.3px;line-height:9px;color:#1a5ccc;overflow:visible"><span style="display:inline-block;transform:scaleX(0.9);transform-origin:0 50%">Aristide 142785</span></div>
<svg class="a" style="left:5px;top:41.3px" width="6.5" height="5" viewBox="0 0 6.5 5"><polygon points="0.4,0.5 6.1,0.5 3.25,4.4" fill="#8ab4ee" stroke="#1a3a7a" stroke-width="0.7"/></svg>
<div class="a psi" style="left:12px;top:38.5px;width:56px;font-size:6.4px;line-height:9px;color:#000"><span style="background:#c3c3c3;position:relative;z-index:1;padding-right:2px">Family (4/19)</span><span style="position:absolute;left:0;right:2px;top:4.5px;height:1px;background:#222"></span></div>
<svg class="a" style="left:6.5px;top:47.3px" width="8.5" height="8.5" viewBox="0 0 10 10"><g fill="#39b030" stroke="#0a2a08" stroke-width="0.9"><circle cx="5" cy="2" r="1.7"/><circle cx="5" cy="8" r="1.7"/><circle cx="2" cy="3.5" r="1.7"/><circle cx="8" cy="3.5" r="1.7"/><circle cx="2" cy="6.5" r="1.7"/><circle cx="8" cy="6.5" r="1.7"/></g><circle cx="5" cy="5" r="1.5" fill="#f4e020"/></svg>
<div class="a psi" style="left:16px;top:47.0px;width:52.5px;font-size:6.3px;line-height:9px;color:#1a5ccc;overflow:visible"><span style="display:inline-block;transform:scaleX(0.9);transform-origin:0 50%">Fedia ICQ</span></div>
<svg class="a" style="left:6.5px;top:56.3px" width="8.5" height="8.5" viewBox="0 0 10 10"><circle cx="4.5" cy="2.3" r="1.9" fill="#8ac0f0" stroke="#246" stroke-width="0.6"/><path d="M1 9.5 Q1 4.5 4.5 4.5 Q8 4.5 8 9.5 Z" fill="#3a7ad8" stroke="#124" stroke-width="0.6"/><circle cx="7.5" cy="7" r="1.6" fill="#e8f0e0"/></svg>
<div class="a psi" style="left:16px;top:56.0px;width:52.5px;font-size:6.3px;line-height:9px;color:#1a5ccc;overflow:visible"><span style="display:inline-block;transform:scaleX(0.9);transform-origin:0 50%">Fedia MSN</span></div>
<svg class="a" style="left:6.5px;top:65.3px" width="8.5" height="8.5" viewBox="0 0 10 10"><circle cx="4.5" cy="2.3" r="1.9" fill="#8ac0f0" stroke="#246" stroke-width="0.6"/><path d="M1 9.5 Q1 4.5 4.5 4.5 Q8 4.5 8 9.5 Z" fill="#3a7ad8" stroke="#124" stroke-width="0.6"/><circle cx="7.5" cy="7" r="1.6" fill="#e8f0e0"/></svg>
<div class="a psi" style="left:16px;top:65.0px;width:52.5px;font-size:6.3px;line-height:9px;color:#1a5ccc;overflow:visible"><span style="display:inline-block;transform:scaleX(0.9);transform-origin:0 50%">Ickis MSN</span></div>
<svg class="a" style="left:6.5px;top:74.3px" width="8.5" height="8.5" viewBox="0 0 10 10"><circle cx="4.5" cy="2.3" r="1.9" fill="#f0c0c0" stroke="#622" stroke-width="0.6"/><path d="M1 9.5 Q1 4.5 4.5 4.5 Q8 4.5 8 9.5 Z" fill="#d84040" stroke="#411" stroke-width="0.6"/><circle cx="7.5" cy="7" r="1.6" fill="#4060d0"/></svg>
<div class="a psi" style="left:16px;top:74.0px;width:52.5px;font-size:6.3px;line-height:9px;color:#1f7f9c;overflow:visible"><span style="display:inline-block;transform:scaleX(0.9);transform-origin:0 50%">Boise MSN</span></div>
<svg class="a" style="left:5px;top:85.3px" width="6.5" height="5" viewBox="0 0 6.5 5"><polygon points="0.4,0.5 6.1,0.5 3.25,4.4" fill="#8ab4ee" stroke="#1a3a7a" stroke-width="0.7"/></svg>
<div class="a psi" style="left:12px;top:82.5px;width:56px;font-size:6.4px;line-height:9px;color:#000"><span style="background:#c3c3c3;position:relative;z-index:1;padding-right:2px">Friends (34/271)</span><span style="position:absolute;left:0;right:2px;top:4.5px;height:1px;background:#222"></span></div>
<svg class="a" style="left:6.5px;top:91.3px" width="8.5" height="8.5" viewBox="0 0 10 10"><circle cx="5" cy="5" r="4.7" fill="#3a6ad8"/><circle cx="5.2" cy="2.2" r="1.4" fill="#f4b020"/><path d="M5.5 3.5 L3 6 L1.5 9 M4.5 5 L7.5 6 M4 6.5 L6.5 9.5 M5 4 L7.5 3" stroke="#f4b020" stroke-width="1.6" fill="none"/></svg>
<div class="a psi" style="left:16px;top:91.0px;width:52.5px;font-size:6.3px;line-height:9px;color:#1a5ccc;overflow:visible"><span style="display:inline-block;transform:scaleX(0.9);transform-origin:0 50%">Aloha AIM</span></div>
<svg class="a" style="left:6.5px;top:100.3px" width="8.5" height="8.5" viewBox="0 0 10 10"><circle cx="5" cy="5" r="4.7" fill="#3a6ad8"/><circle cx="5.2" cy="2.2" r="1.4" fill="#f4b020"/><path d="M5.5 3.5 L3 6 L1.5 9 M4.5 5 L7.5 6 M4 6.5 L6.5 9.5 M5 4 L7.5 3" stroke="#f4b020" stroke-width="1.6" fill="none"/></svg>
<div class="a psi" style="left:16px;top:100.0px;width:52.5px;font-size:6.3px;line-height:9px;color:#1a5ccc;overflow:visible"><span style="display:inline-block;transform:scaleX(0.9);transform-origin:0 50%">Arokh AIM</span></div>
<svg class="a" style="left:6.5px;top:109.3px" width="8.5" height="8.5" viewBox="0 0 10 10"><circle cx="5" cy="5" r="4.7" fill="#3a6ad8"/><circle cx="5.2" cy="2.2" r="1.4" fill="#f4b020"/><path d="M5.5 3.5 L3 6 L1.5 9 M4.5 5 L7.5 6 M4 6.5 L6.5 9.5 M5 4 L7.5 3" stroke="#f4b020" stroke-width="1.6" fill="none"/></svg>
<div class="a psi" style="left:16px;top:109.0px;width:52.5px;font-size:6.3px;line-height:9px;color:#1a5ccc;overflow:visible"><span style="display:inline-block;transform:scaleX(0.9);transform-origin:0 50%">BrokkenTWolf AIM</span></div>
<svg class="a" style="left:6.5px;top:118.30000000000001px" width="8.5" height="8.5" viewBox="0 0 10 10"><g fill="#39b030" stroke="#0a2a08" stroke-width="0.9"><circle cx="5" cy="2" r="1.7"/><circle cx="5" cy="8" r="1.7"/><circle cx="2" cy="3.5" r="1.7"/><circle cx="8" cy="3.5" r="1.7"/><circle cx="2" cy="6.5" r="1.7"/><circle cx="8" cy="6.5" r="1.7"/></g><circle cx="5" cy="5" r="1.5" fill="#f4e020"/></svg>
<div class="a psi" style="left:16px;top:118.0px;width:52.5px;font-size:6.3px;line-height:9px;color:#1a5ccc;overflow:visible"><span style="display:inline-block;transform:scaleX(0.9);transform-origin:0 50%">Chinor ICQ</span></div>
<svg class="a" style="left:6.5px;top:127.30000000000001px" width="8.5" height="8.5" viewBox="0 0 10 10"><circle cx="5" cy="5" r="4.7" fill="#3a6ad8"/><circle cx="5.2" cy="2.2" r="1.4" fill="#f4b020"/><path d="M5.5 3.5 L3 6 L1.5 9 M4.5 5 L7.5 6 M4 6.5 L6.5 9.5 M5 4 L7.5 3" stroke="#f4b020" stroke-width="1.6" fill="none"/></svg>
<div class="a psi" style="left:16px;top:127.0px;width:52.5px;font-size:6.3px;line-height:9px;color:#1a5ccc;overflow:visible"><span style="display:inline-block;transform:scaleX(0.9);transform-origin:0 50%">Crosscheck Fox A...</span></div>
<svg class="a" style="left:6.5px;top:136.3px" width="8.5" height="8.5" viewBox="0 0 10 10"><circle cx="4.5" cy="2.3" r="1.9" fill="#8ac0f0" stroke="#246" stroke-width="0.6"/><path d="M1 9.5 Q1 4.5 4.5 4.5 Q8 4.5 8 9.5 Z" fill="#3a7ad8" stroke="#124" stroke-width="0.6"/><circle cx="7.5" cy="7" r="1.6" fill="#e8f0e0"/></svg>
<div class="a psi" style="left:16px;top:136.0px;width:52.5px;font-size:6.3px;line-height:9px;color:#1a5ccc;overflow:visible"><span style="display:inline-block;transform:scaleX(0.9);transform-origin:0 50%">Foxwell MSN</span></div>
<svg class="a" style="left:6.5px;top:145.3px" width="8.5" height="8.5" viewBox="0 0 10 10"><polygon points="5,0.3 6.5,3.5 9.8,3.8 7.3,6.1 8.1,9.6 5,7.8 1.9,9.6 2.7,6.1 0.2,3.8 3.5,3.5" fill="#f6f000" stroke="#553" stroke-width="0.7"/></svg>
<div class="a psi" style="left:16px;top:145.0px;width:52.5px;font-size:6.3px;line-height:9px;color:#1a5ccc;overflow:visible"><span style="display:inline-block;transform:scaleX(0.9);transform-origin:0 50%">Jamnet J</span></div>
<svg class="a" style="left:6.5px;top:154.3px" width="8.5" height="8.5" viewBox="0 0 10 10"><circle cx="5" cy="5" r="4.7" fill="#3a6ad8"/><circle cx="5.2" cy="2.2" r="1.4" fill="#f4b020"/><path d="M5.5 3.5 L3 6 L1.5 9 M4.5 5 L7.5 6 M4 6.5 L6.5 9.5 M5 4 L7.5 3" stroke="#f4b020" stroke-width="1.6" fill="none"/></svg>
<div class="a psi" style="left:16px;top:154.0px;width:52.5px;font-size:6.3px;line-height:9px;color:#1a5ccc;overflow:visible"><span style="display:inline-block;transform:scaleX(0.9);transform-origin:0 50%">JeffD AIM</span></div>
<svg class="a" style="left:6.5px;top:163.3px" width="8.5" height="8.5" viewBox="0 0 10 10"><g fill="#39b030" stroke="#0a2a08" stroke-width="0.9"><circle cx="5" cy="2" r="1.7"/><circle cx="5" cy="8" r="1.7"/><circle cx="2" cy="3.5" r="1.7"/><circle cx="8" cy="3.5" r="1.7"/><circle cx="2" cy="6.5" r="1.7"/><circle cx="8" cy="6.5" r="1.7"/></g><circle cx="5" cy="5" r="1.5" fill="#f4e020"/></svg>
<div class="a psi" style="left:16px;top:163.0px;width:52.5px;font-size:6.3px;line-height:9px;color:#1a5ccc;overflow:visible"><span style="display:inline-block;transform:scaleX(0.9);transform-origin:0 50%">Kintu ICQ</span></div>
<svg class="a" style="left:6.5px;top:172.3px" width="8.5" height="8.5" viewBox="0 0 10 10"><polygon points="5,0.3 6.5,3.5 9.8,3.8 7.3,6.1 8.1,9.6 5,7.8 1.9,9.6 2.7,6.1 0.2,3.8 3.5,3.5" fill="#e82020" stroke="#711" stroke-width="0.7"/></svg>
<div class="a psi" style="left:16px;top:172.0px;width:52.5px;font-size:6.3px;line-height:9px;color:#1a5ccc;overflow:visible"><span style="display:inline-block;transform:scaleX(0.9);transform-origin:0 50%">Kintu J</span></div>
<svg class="a" style="left:6.5px;top:181.3px" width="8.5" height="8.5" viewBox="0 0 10 10"><g fill="#39b030" stroke="#0a2a08" stroke-width="0.9"><circle cx="5" cy="2" r="1.7"/><circle cx="5" cy="8" r="1.7"/><circle cx="2" cy="3.5" r="1.7"/><circle cx="8" cy="3.5" r="1.7"/><circle cx="2" cy="6.5" r="1.7"/><circle cx="8" cy="6.5" r="1.7"/></g><circle cx="5" cy="5" r="1.5" fill="#f4e020"/></svg>
<div class="a psi" style="left:16px;top:181.0px;width:52.5px;font-size:6.3px;line-height:9px;color:#1a5ccc;overflow:visible"><span style="display:inline-block;transform:scaleX(0.9);transform-origin:0 50%">Mirawais ICQ</span></div>
<svg class="a" style="left:6.5px;top:190.3px" width="8.5" height="8.5" viewBox="0 0 10 10"><circle cx="5.3" cy="5.6" r="3.8" fill="#f8d820" stroke="#853" stroke-width="0.6"/><path d="M0.5 0.8 L4 3 M2 0.5 L3.5 3.5" stroke="#e02020" stroke-width="1.3"/></svg>
<div class="a psi" style="left:16px;top:190.0px;width:52.5px;font-size:6.3px;line-height:9px;color:#1a5ccc;overflow:visible"><span style="display:inline-block;transform:scaleX(0.9);transform-origin:0 50%">Mirawais YN</span></div>
<svg class="a" style="left:6.5px;top:199.3px" width="8.5" height="8.5" viewBox="0 0 10 10"><g fill="#39b030" stroke="#0a2a08" stroke-width="0.9"><circle cx="5" cy="2" r="1.7"/><circle cx="5" cy="8" r="1.7"/><circle cx="2" cy="3.5" r="1.7"/><circle cx="8" cy="3.5" r="1.7"/><circle cx="2" cy="6.5" r="1.7"/><circle cx="8" cy="6.5" r="1.7"/></g><circle cx="5" cy="5" r="1.5" fill="#f4e020"/></svg>
<div class="a psi" style="left:16px;top:199.0px;width:52.5px;font-size:6.3px;line-height:9px;color:#1a5ccc;overflow:visible"><span style="display:inline-block;transform:scaleX(0.9);transform-origin:0 50%">Mtesa ICQ</span></div>
<svg class="a" style="left:6.5px;top:208.3px" width="8.5" height="8.5" viewBox="0 0 10 10"><circle cx="4.5" cy="2.3" r="1.9" fill="#8ac0f0" stroke="#246" stroke-width="0.6"/><path d="M1 9.5 Q1 4.5 4.5 4.5 Q8 4.5 8 9.5 Z" fill="#3a7ad8" stroke="#124" stroke-width="0.6"/><circle cx="7.5" cy="7" r="1.6" fill="#e8f0e0"/></svg>
<div class="a psi" style="left:16px;top:208.0px;width:52.5px;font-size:6.3px;line-height:9px;color:#1a5ccc;overflow:visible"><span style="display:inline-block;transform:scaleX(0.9);transform-origin:0 50%">Myra MSN</span></div>
<svg class="a" style="left:6.5px;top:217.3px" width="8.5" height="8.5" viewBox="0 0 10 10"><circle cx="5" cy="5" r="4.7" fill="#3a6ad8"/><circle cx="5.2" cy="2.2" r="1.4" fill="#f4b020"/><path d="M5.5 3.5 L3 6 L1.5 9 M4.5 5 L7.5 6 M4 6.5 L6.5 9.5 M5 4 L7.5 3" stroke="#f4b020" stroke-width="1.6" fill="none"/></svg>
<div class="a psi" style="left:16px;top:217.0px;width:52.5px;font-size:6.3px;line-height:9px;color:#1a5ccc;overflow:visible"><span style="display:inline-block;transform:scaleX(0.9);transform-origin:0 50%">Nerf Coyote AIM</span></div>
<svg class="a" style="left:6.5px;top:226.3px" width="8.5" height="8.5" viewBox="0 0 10 10"><circle cx="5" cy="5" r="4.7" fill="#3a6ad8"/><circle cx="5.2" cy="2.2" r="1.4" fill="#f4b020"/><path d="M5.5 3.5 L3 6 L1.5 9 M4.5 5 L7.5 6 M4 6.5 L6.5 9.5 M5 4 L7.5 3" stroke="#f4b020" stroke-width="1.6" fill="none"/></svg>
<div class="a psi" style="left:16px;top:226.0px;width:52.5px;font-size:6.3px;line-height:9px;color:#1a5ccc;overflow:visible"><span style="display:inline-block;transform:scaleX(0.9);transform-origin:0 50%">Pruitsman AIM</span></div>
<div class="a" style="left:6px;top:235.0px;width:63px;height:9px;background:#000"></div>
<svg class="a" style="left:6.5px;top:235.3px" width="8.5" height="8.5" viewBox="0 0 10 10"><circle cx="5" cy="5" r="4.7" fill="#3a6ad8"/><circle cx="5.2" cy="2.2" r="1.4" fill="#f4b020"/><path d="M5.5 3.5 L3 6 L1.5 9 M4.5 5 L7.5 6 M4 6.5 L6.5 9.5 M5 4 L7.5 3" stroke="#f4b020" stroke-width="1.6" fill="none"/></svg>
<div class="a psi" style="left:16px;top:235.0px;width:52.5px;font-size:6.3px;line-height:9px;color:#fff;overflow:visible"><span style="display:inline-block;transform:scaleX(0.9);transform-origin:0 50%">Scruff E AIM</span></div>
<svg class="a" style="left:6.5px;top:244.3px" width="8.5" height="8.5" viewBox="0 0 10 10"><circle cx="5.3" cy="5.6" r="3.8" fill="#f8d820" stroke="#853" stroke-width="0.6"/><path d="M0.5 0.8 L4 3 M2 0.5 L3.5 3.5" stroke="#e02020" stroke-width="1.3"/></svg>
<div class="a psi" style="left:16px;top:244.0px;width:52.5px;font-size:6.3px;line-height:9px;color:#1a5ccc;overflow:visible"><span style="display:inline-block;transform:scaleX(0.9);transform-origin:0 50%">Scruff E Y</span></div>
<svg class="a" style="left:6.5px;top:253.3px" width="8.5" height="8.5" viewBox="0 0 10 10"><g fill="#39b030" stroke="#0a2a08" stroke-width="0.9"><circle cx="5" cy="2" r="1.7"/><circle cx="5" cy="8" r="1.7"/><circle cx="2" cy="3.5" r="1.7"/><circle cx="8" cy="3.5" r="1.7"/><circle cx="2" cy="6.5" r="1.7"/><circle cx="8" cy="6.5" r="1.7"/></g><circle cx="5" cy="5" r="1.5" fill="#f4e020"/></svg>
<div class="a psi" style="left:16px;top:253.0px;width:52.5px;font-size:6.3px;line-height:9px;color:#1a5ccc;overflow:visible"><span style="display:inline-block;transform:scaleX(0.9);transform-origin:0 50%">Sha ICQ</span></div>
<svg class="a" style="left:6.5px;top:262.3px" width="8.5" height="8.5" viewBox="0 0 10 10"><circle cx="4.5" cy="2.3" r="1.9" fill="#8ac0f0" stroke="#246" stroke-width="0.6"/><path d="M1 9.5 Q1 4.5 4.5 4.5 Q8 4.5 8 9.5 Z" fill="#3a7ad8" stroke="#124" stroke-width="0.6"/><circle cx="7.5" cy="7" r="1.6" fill="#e8f0e0"/></svg>
<div class="a psi" style="left:16px;top:262.0px;width:52.5px;font-size:6.3px;line-height:9px;color:#1a5ccc;overflow:visible"><span style="display:inline-block;transform:scaleX(0.9);transform-origin:0 50%">Shin Bio Hazard 2...</span></div>
<svg class="a" style="left:6.5px;top:271.3px" width="8.5" height="8.5" viewBox="0 0 10 10"><circle cx="4.5" cy="2.3" r="1.9" fill="#8ac0f0" stroke="#246" stroke-width="0.6"/><path d="M1 9.5 Q1 4.5 4.5 4.5 Q8 4.5 8 9.5 Z" fill="#3a7ad8" stroke="#124" stroke-width="0.6"/><circle cx="7.5" cy="7" r="1.6" fill="#e8f0e0"/></svg>
<div class="a psi" style="left:16px;top:271.0px;width:52.5px;font-size:6.3px;line-height:9px;color:#1a5ccc;overflow:visible"><span style="display:inline-block;transform:scaleX(0.9);transform-origin:0 50%">Shin Bio Hazard ...</span></div>
<svg class="a" style="left:6.5px;top:280.3px" width="8.5" height="8.5" viewBox="0 0 10 10"><circle cx="5" cy="5" r="4.7" fill="#3a6ad8"/><circle cx="5.2" cy="2.2" r="1.4" fill="#f4b020"/><path d="M5.5 3.5 L3 6 L1.5 9 M4.5 5 L7.5 6 M4 6.5 L6.5 9.5 M5 4 L7.5 3" stroke="#f4b020" stroke-width="1.6" fill="none"/></svg>
<div class="a psi" style="left:16px;top:280.0px;width:52.5px;font-size:6.3px;line-height:9px;color:#1a5ccc;overflow:visible"><span style="display:inline-block;transform:scaleX(0.9);transform-origin:0 50%">Sniffles AIM</span></div>
<svg class="a" style="left:6.5px;top:289.3px" width="8.5" height="8.5" viewBox="0 0 10 10"><circle cx="5" cy="5" r="4.7" fill="#3a6ad8"/><circle cx="5.2" cy="2.2" r="1.4" fill="#f4b020"/><path d="M5.5 3.5 L3 6 L1.5 9 M4.5 5 L7.5 6 M4 6.5 L6.5 9.5 M5 4 L7.5 3" stroke="#f4b020" stroke-width="1.6" fill="none"/></svg>
<div class="a psi" style="left:16px;top:289.0px;width:52.5px;font-size:6.3px;line-height:9px;color:#1a5ccc;overflow:visible"><span style="display:inline-block;transform:scaleX(0.9);transform-origin:0 50%">TKWulf AIM</span></div>
<svg class="a" style="left:6.5px;top:298.3px" width="8.5" height="8.5" viewBox="0 0 10 10"><circle cx="4.5" cy="2.3" r="1.9" fill="#8ac0f0" stroke="#246" stroke-width="0.6"/><path d="M1 9.5 Q1 4.5 4.5 4.5 Q8 4.5 8 9.5 Z" fill="#3a7ad8" stroke="#124" stroke-width="0.6"/><circle cx="7.5" cy="7" r="1.6" fill="#e8f0e0"/></svg>
<div class="a psi" style="left:16px;top:298.0px;width:52.5px;font-size:6.3px;line-height:9px;color:#1a5ccc;overflow:visible"><span style="display:inline-block;transform:scaleX(0.9);transform-origin:0 50%">Valerio MSN</span></div>
<svg class="a" style="left:6.5px;top:307.3px" width="8.5" height="8.5" viewBox="0 0 10 10"><circle cx="5" cy="5" r="4.7" fill="#a8b8d8"/><circle cx="5.2" cy="2.2" r="1.4" fill="#f8e840"/><path d="M5.5 3.5 L3 6 L1.5 9 M4.5 5 L7.5 6 M4 6.5 L6.5 9.5 M5 4 L7.5 3" stroke="#f8e840" stroke-width="1.6" fill="none"/></svg>
<div class="a psi" style="left:16px;top:307.0px;width:52.5px;font-size:6.3px;line-height:9px;color:#1f7f9c;overflow:visible"><span style="display:inline-block;transform:scaleX(0.9);transform-origin:0 50%">Cnipur AIM</span></div>
<svg class="a" style="left:6.5px;top:316.3px" width="8.5" height="8.5" viewBox="0 0 10 10"><circle cx="5" cy="5" r="4.7" fill="#a8b8d8"/><circle cx="5.2" cy="2.2" r="1.4" fill="#f8e840"/><path d="M5.5 3.5 L3 6 L1.5 9 M4.5 5 L7.5 6 M4 6.5 L6.5 9.5 M5 4 L7.5 3" stroke="#f8e840" stroke-width="1.6" fill="none"/></svg>
<div class="a psi" style="left:16px;top:316.0px;width:52.5px;font-size:6.3px;line-height:9px;color:#1f7f9c;overflow:visible"><span style="display:inline-block;transform:scaleX(0.9);transform-origin:0 50%">Ian Layton AIM</span></div>
<svg class="a" style="left:6.5px;top:325.3px" width="8.5" height="8.5" viewBox="0 0 10 10"><circle cx="5" cy="5" r="4.7" fill="#a8b8d8"/><circle cx="5.2" cy="2.2" r="1.4" fill="#f8e840"/><path d="M5.5 3.5 L3 6 L1.5 9 M4.5 5 L7.5 6 M4 6.5 L6.5 9.5 M5 4 L7.5 3" stroke="#f8e840" stroke-width="1.6" fill="none"/></svg>
<div class="a psi" style="left:16px;top:325.0px;width:52.5px;font-size:6.3px;line-height:9px;color:#1f7f9c;overflow:visible"><span style="display:inline-block;transform:scaleX(0.9);transform-origin:0 50%">Shenryyr AIM</span></div>
<svg class="a" style="left:6.5px;top:334.3px" width="8.5" height="8.5" viewBox="0 0 10 10"><g fill="#f4f4f4" stroke="#111" stroke-width="0.9"><circle cx="5" cy="2" r="1.7"/><circle cx="5" cy="8" r="1.7"/><circle cx="2" cy="3.5" r="1.7"/><circle cx="8" cy="3.5" r="1.7"/><circle cx="2" cy="6.5" r="1.7"/><circle cx="8" cy="6.5" r="1.7"/></g><circle cx="5" cy="5" r="1.5" fill="#fff"/></svg>
<div class="a psi" style="left:16px;top:334.0px;width:52.5px;font-size:6.3px;line-height:9px;color:#1f7f9c;overflow:visible"><span style="display:inline-block;transform:scaleX(0.9);transform-origin:0 50%">Shenryyr ICQ</span></div>
<svg class="a" style="left:6.5px;top:343.3px" width="8.5" height="8.5" viewBox="0 0 10 10"><g fill="#f4f4f4" stroke="#111" stroke-width="0.9"><circle cx="5" cy="2" r="1.7"/><circle cx="5" cy="8" r="1.7"/><circle cx="2" cy="3.5" r="1.7"/><circle cx="8" cy="3.5" r="1.7"/><circle cx="2" cy="6.5" r="1.7"/><circle cx="8" cy="6.5" r="1.7"/></g><circle cx="5" cy="5" r="1.5" fill="#fff"/></svg>
<div class="a psi" style="left:16px;top:343.0px;width:52.5px;font-size:6.3px;line-height:9px;color:#1f7f9c;overflow:visible"><span style="display:inline-block;transform:scaleX(0.9);transform-origin:0 50%">Simba II ICQ</span></div>
<svg class="a" style="left:6.5px;top:352.3px" width="8.5" height="8.5" viewBox="0 0 10 10"><g fill="#f4f4f4" stroke="#111" stroke-width="0.9"><circle cx="5" cy="2" r="1.7"/><circle cx="5" cy="8" r="1.7"/><circle cx="2" cy="3.5" r="1.7"/><circle cx="8" cy="3.5" r="1.7"/><circle cx="2" cy="6.5" r="1.7"/><circle cx="8" cy="6.5" r="1.7"/></g><circle cx="5" cy="5" r="1.5" fill="#fff"/></svg>
<div class="a psi" style="left:16px;top:352.0px;width:52.5px;font-size:6.3px;line-height:9px;color:#1f7f9c;overflow:visible"><span style="display:inline-block;transform:scaleX(0.9);transform-origin:0 50%">SimbaW ICQ</span></div>
<svg class="a" style="left:6.5px;top:361.3px" width="8.5" height="8.5" viewBox="0 0 10 10"><g fill="#f4f4f4" stroke="#111" stroke-width="0.9"><circle cx="5" cy="2" r="1.7"/><circle cx="5" cy="8" r="1.7"/><circle cx="2" cy="3.5" r="1.7"/><circle cx="8" cy="3.5" r="1.7"/><circle cx="2" cy="6.5" r="1.7"/><circle cx="8" cy="6.5" r="1.7"/></g><circle cx="5" cy="5" r="1.5" fill="#fff"/></svg>
<div class="a psi" style="left:16px;top:361.0px;width:52.5px;font-size:6.3px;line-height:9px;color:#1f7f9c;overflow:visible"><span style="display:inline-block;transform:scaleX(0.9);transform-origin:0 50%">WhiteWolf ICQ</span></div>
<svg class="a" style="left:6.5px;top:370.3px" width="8.5" height="8.5" viewBox="0 0 10 10"><g fill="#f0f0f0" stroke="#a01010" stroke-width="0.9"><circle cx="5" cy="2" r="1.7"/><circle cx="5" cy="8" r="1.7"/><circle cx="2" cy="3.5" r="1.7"/><circle cx="8" cy="3.5" r="1.7"/><circle cx="2" cy="6.5" r="1.7"/><circle cx="8" cy="6.5" r="1.7"/></g><circle cx="5" cy="5" r="1.6" fill="#e02020"/></svg>
<div class="a psi" style="left:16px;top:370.0px;width:52.5px;font-size:6.3px;line-height:9px;color:#1f7f9c;overflow:visible"><span style="display:inline-block;transform:scaleX(0.9);transform-origin:0 50%">Mbelo ICQ</span></div>
<svg class="a" style="left:6.5px;top:379.3px" width="8.5" height="8.5" viewBox="0 0 10 10"><circle cx="4.5" cy="2.3" r="1.9" fill="#f0c0c0" stroke="#622" stroke-width="0.6"/><path d="M1 9.5 Q1 4.5 4.5 4.5 Q8 4.5 8 9.5 Z" fill="#d84040" stroke="#411" stroke-width="0.6"/><circle cx="7.5" cy="7" r="1.6" fill="#4060d0"/></svg>
<div class="a psi" style="left:16px;top:379.0px;width:52.5px;font-size:6.3px;line-height:9px;color:#1f7f9c;overflow:visible"><span style="display:inline-block;transform:scaleX(0.9);transform-origin:0 50%">Shenryyr MSN</span></div>
<svg class="a" style="left:6.5px;top:388.3px" width="8.5" height="8.5" viewBox="0 0 10 10"><circle cx="4.5" cy="2.3" r="1.9" fill="#f0c0c0" stroke="#622" stroke-width="0.6"/><path d="M1 9.5 Q1 4.5 4.5 4.5 Q8 4.5 8 9.5 Z" fill="#d84040" stroke="#411" stroke-width="0.6"/><circle cx="7.5" cy="7" r="1.6" fill="#4060d0"/></svg>
<div class="a psi" style="left:16px;top:388.0px;width:52.5px;font-size:6.3px;line-height:9px;color:#1f7f9c;overflow:visible"><span style="display:inline-block;transform:scaleX(0.9);transform-origin:0 50%">Simba II MSN</span></div>
<svg class="a" style="left:5px;top:399.3px" width="6.5" height="5" viewBox="0 0 6.5 5"><polygon points="0.4,0.5 6.1,0.5 3.25,4.4" fill="#8ab4ee" stroke="#1a3a7a" stroke-width="0.7"/></svg>
<div class="a psi" style="left:12px;top:396.5px;width:56px;font-size:6.4px;line-height:9px;color:#000"><span style="background:#c3c3c3;position:relative;z-index:1;padding-right:2px">ITESM (2/46)</span><span style="position:absolute;left:0;right:2px;top:4.5px;height:1px;background:#222"></span></div>
<svg class="a" style="left:6.5px;top:405.3px" width="8.5" height="8.5" viewBox="0 0 10 10"><g fill="#f0f0f0" stroke="#a01010" stroke-width="0.9"><circle cx="5" cy="2" r="1.7"/><circle cx="5" cy="8" r="1.7"/><circle cx="2" cy="3.5" r="1.7"/><circle cx="8" cy="3.5" r="1.7"/><circle cx="2" cy="6.5" r="1.7"/><circle cx="8" cy="6.5" r="1.7"/></g><circle cx="5" cy="5" r="1.6" fill="#e02020"/></svg>
<div class="a psi" style="left:16px;top:405.0px;width:52.5px;font-size:6.3px;line-height:9px;color:#1f7f9c;overflow:visible"><span style="display:inline-block;transform:scaleX(0.9);transform-origin:0 50%">Alek ICQ</span></div>
<svg class="a" style="left:6.5px;top:414.3px" width="8.5" height="8.5" viewBox="0 0 10 10"><polygon points="5,0.3 6.5,3.5 9.8,3.8 7.3,6.1 8.1,9.6 5,7.8 1.9,9.6 2.7,6.1 0.2,3.8 3.5,3.5" fill="#f4f4f4" stroke="#333" stroke-width="0.7"/></svg>
<div class="a psi" style="left:16px;top:414.0px;width:52.5px;font-size:6.3px;line-height:9px;color:#1f7f9c;overflow:visible"><span style="display:inline-block;transform:scaleX(0.9);transform-origin:0 50%">Alek J</span></div>
<svg class="a" style="left:5px;top:425.3px" width="6.5" height="5" viewBox="0 0 6.5 5"><polygon points="0.4,0.5 6.1,0.5 3.25,4.4" fill="#8ab4ee" stroke="#1a3a7a" stroke-width="0.7"/></svg>
<div class="a psi" style="left:12px;top:422.5px;width:56px;font-size:6.4px;line-height:9px;color:#000"><span style="background:#c3c3c3;position:relative;z-index:1;padding-right:2px">Jabber (1/3)</span><span style="position:absolute;left:0;right:2px;top:4.5px;height:1px;background:#222"></span></div>
<svg class="a" style="left:6.5px;top:431.3px" width="8.5" height="8.5" viewBox="0 0 10 10"><polygon points="5,0.3 6.5,3.5 9.8,3.8 7.3,6.1 8.1,9.6 5,7.8 1.9,9.6 2.7,6.1 0.2,3.8 3.5,3.5" fill="#f4f4f4" stroke="#333" stroke-width="0.7"/></svg>
<div class="a psi" style="left:16px;top:431.0px;width:52.5px;font-size:6.3px;line-height:9px;color:#1f7f9c;overflow:visible"><span style="display:inline-block;transform:scaleX(0.9);transform-origin:0 50%">Will@Netmindz</span></div>
<svg class="a" style="left:5px;top:442.3px" width="6.5" height="5" viewBox="0 0 6.5 5"><polygon points="0.4,0.5 6.1,0.5 3.25,4.4" fill="#8ab4ee" stroke="#1a3a7a" stroke-width="0.7"/></svg>
<div class="a psi" style="left:12px;top:439.5px;width:56px;font-size:6.4px;line-height:9px;color:#000"><span style="background:#c3c3c3;position:relative;z-index:1;padding-right:2px">zFriends (2/21)</span><span style="position:absolute;left:0;right:2px;top:4.5px;height:1px;background:#222"></span></div>
<svg class="a" style="left:6.5px;top:448.3px" width="8.5" height="8.5" viewBox="0 0 10 10"><circle cx="5" cy="5" r="4.7" fill="#3a6ad8"/><circle cx="5.2" cy="2.2" r="1.4" fill="#f4b020"/><path d="M5.5 3.5 L3 6 L1.5 9 M4.5 5 L7.5 6 M4 6.5 L6.5 9.5 M5 4 L7.5 3" stroke="#f4b020" stroke-width="1.6" fill="none"/></svg>
<div class="a psi" style="left:16px;top:448.0px;width:52.5px;font-size:6.3px;line-height:9px;color:#1a5ccc;overflow:visible"><span style="display:inline-block;transform:scaleX(0.9);transform-origin:0 50%">marcus2dx@aim</span></div>
<svg class="a" style="left:6.5px;top:457.3px" width="8.5" height="8.5" viewBox="0 0 10 10"><circle cx="5.3" cy="5.6" r="3.8" fill="#f8d820" stroke="#853" stroke-width="0.6"/><path d="M0.5 0.8 L4 3 M2 0.5 L3.5 3.5" stroke="#e02020" stroke-width="1.3"/></svg>
<div class="a psi" style="left:16px;top:457.0px;width:52.5px;font-size:6.3px;line-height:9px;color:#1f7f9c;overflow:visible"><span style="display:inline-block;transform:scaleX(0.9);transform-origin:0 50%">AKSeeWolf YN</span></div>
<svg class="a" style="left:5px;top:468.3px" width="6.5" height="5" viewBox="0 0 6.5 5"><polygon points="0.4,0.5 6.1,0.5 3.25,4.4" fill="#8ab4ee" stroke="#1a3a7a" stroke-width="0.7"/></svg>
<div class="a psi" style="left:12px;top:465.5px;width:56px;font-size:6.4px;line-height:9px;color:#000"><span style="background:#c3c3c3;position:relative;z-index:1;padding-right:2px">zHT (1/28)</span><span style="position:absolute;left:0;right:2px;top:4.5px;height:1px;background:#222"></span></div>
<svg class="a" style="left:6.5px;top:474.3px" width="8.5" height="8.5" viewBox="0 0 10 10"><circle cx="4.5" cy="2.3" r="1.9" fill="#8ac0f0" stroke="#246" stroke-width="0.6"/><path d="M1 9.5 Q1 4.5 4.5 4.5 Q8 4.5 8 9.5 Z" fill="#3a7ad8" stroke="#124" stroke-width="0.6"/><circle cx="7.5" cy="7" r="1.6" fill="#e8f0e0"/></svg>
<div class="a psi" style="left:16px;top:474.0px;width:52.5px;font-size:6.3px;line-height:9px;color:#1a5ccc;overflow:visible"><span style="display:inline-block;transform:scaleX(0.9);transform-origin:0 50%">Boy16</span></div>
<svg class="a" style="left:5px;top:485.3px" width="6.5" height="5" viewBox="0 0 6.5 5"><polygon points="0.4,0.5 6.1,0.5 3.25,4.4" fill="#8ab4ee" stroke="#1a3a7a" stroke-width="0.7"/></svg>
<div class="a psi" style="left:12px;top:482.5px;width:56px;font-size:6.4px;line-height:9px;color:#000"><span style="background:#c3c3c3;position:relative;z-index:1;padding-right:2px">zITESM (1/5)</span><span style="position:absolute;left:0;right:2px;top:4.5px;height:1px;background:#222"></span></div>
<svg class="a" style="left:6.5px;top:491.3px" width="8.5" height="8.5" viewBox="0 0 10 10"><circle cx="4.5" cy="2.3" r="1.9" fill="#8ac0f0" stroke="#246" stroke-width="0.6"/><path d="M1 9.5 Q1 4.5 4.5 4.5 Q8 4.5 8 9.5 Z" fill="#3a7ad8" stroke="#124" stroke-width="0.6"/><circle cx="7.5" cy="7" r="1.6" fill="#e8f0e0"/></svg>
<div class="a psi" style="left:16px;top:491.0px;width:52.5px;font-size:6.3px;line-height:9px;color:#1a5ccc;overflow:visible"><span style="display:inline-block;transform:scaleX(0.9);transform-origin:0 50%">benosantiagofe</span></div>
<svg class="a" style="left:5px;top:502.29999999999995px" width="6.5" height="5" viewBox="0 0 6.5 5"><polygon points="0.4,0.5 6.1,0.5 3.25,4.4" fill="#8ab4ee" stroke="#1a3a7a" stroke-width="0.7"/></svg>
<div class="a psi" style="left:12px;top:499.5px;width:56px;font-size:6.4px;line-height:9px;color:#000"><span style="background:#c3c3c3;position:relative;z-index:1;padding-right:2px">zWork (1/5)</span><span style="position:absolute;left:0;right:2px;top:4.5px;height:1px;background:#222"></span></div>
<svg class="a" style="left:6.5px;top:508.29999999999995px" width="8.5" height="8.5" viewBox="0 0 10 10"><circle cx="4.5" cy="2.3" r="1.9" fill="#f0c0c0" stroke="#622" stroke-width="0.6"/><path d="M1 9.5 Q1 4.5 4.5 4.5 Q8 4.5 8 9.5 Z" fill="#d84040" stroke="#411" stroke-width="0.6"/><circle cx="7.5" cy="7" r="1.6" fill="#4060d0"/></svg>
<div class="a psi" style="left:16px;top:508.0px;width:52.5px;font-size:6.3px;line-height:9px;color:#1f7f9c;overflow:visible"><span style="display:inline-block;transform:scaleX(0.9);transform-origin:0 50%">Jorge Correola</span></div>
<svg class="a" style="left:5px;top:519.3px" width="6.5" height="5" viewBox="0 0 6.5 5"><polygon points="0.4,0.5 6.1,0.5 3.25,4.4" fill="#8ab4ee" stroke="#1a3a7a" stroke-width="0.7"/></svg>
<div class="a psi" style="left:12px;top:516.5px;width:56px;font-size:6.4px;line-height:9px;color:#000"><span style="background:#c3c3c3;position:relative;z-index:1;padding-right:2px">Agents/Transports</span><span style="position:absolute;left:0;right:2px;top:4.5px;height:1px;background:#222"></span></div>
<svg class="a" style="left:6.5px;top:525.3px" width="8.5" height="8.5" viewBox="0 0 10 10"><circle cx="5" cy="5" r="4.7" fill="#3a6ad8"/><circle cx="5.2" cy="2.2" r="1.4" fill="#f4b020"/><path d="M5.5 3.5 L3 6 L1.5 9 M4.5 5 L7.5 6 M4 6.5 L6.5 9.5 M5 4 L7.5 3" stroke="#f4b020" stroke-width="1.6" fill="none"/></svg>
<div class="a psi" style="left:16px;top:525.0px;width:52.5px;font-size:6.3px;line-height:9px;color:#1a5ccc;overflow:visible"><span style="display:inline-block;transform:scaleX(0.9);transform-origin:0 50%">AIM</span></div>
<svg class="a" style="left:6.5px;top:534.3px" width="8.5" height="8.5" viewBox="0 0 10 10"><g fill="#39b030" stroke="#0a2a08" stroke-width="0.9"><circle cx="5" cy="2" r="1.7"/><circle cx="5" cy="8" r="1.7"/><circle cx="2" cy="3.5" r="1.7"/><circle cx="8" cy="3.5" r="1.7"/><circle cx="2" cy="6.5" r="1.7"/><circle cx="8" cy="6.5" r="1.7"/></g><circle cx="5" cy="5" r="1.5" fill="#f4e020"/></svg>
<div class="a psi" style="left:16px;top:534.0px;width:52.5px;font-size:6.3px;line-height:9px;color:#1a5ccc;overflow:visible"><span style="display:inline-block;transform:scaleX(0.9);transform-origin:0 50%">ICQ</span></div>
<div class="a" style="left:1px;top:547px;width:76px;height:13px;background:#f2f2f2;border:1px solid #999;border-top-color:#fff;border-left-color:#fff"></div>
<div class="a" style="left:4.5px;top:547.5px;width:72.5px;font-size:8.2px;line-height:12px;font-weight:bold">2 events received</div>
<div class="a" style="left:22px;top:561px;width:1px;height:13px;background:#bbb"></div>
<div class="a" style="left:43px;top:561px;width:1px;height:13px;background:#bbb"></div>
<div class="a" style="left:54px;top:561px;width:1px;height:13px;background:#bbb"></div>
<div class="a" style="left:65.5px;top:561px;width:1px;height:13px;background:#bbb"></div>
<div class="a" style="left:4px;top:564px;width:5px;height:4px;background:#555;border-radius:0 0 3px 3px"></div><div class="a" style="left:6px;top:568px;width:1px;height:3px;background:#555"></div><div class="a" style="left:4.5px;top:571px;width:4px;height:1px;background:#555"></div>
<div class="a" style="left:10px;top:564px;width:5px;height:7px;border-radius:3px;background:#8ab8f0"></div>
<div class="a" style="left:17px;top:566px;width:1px;height:5px;background:#999;transform:rotate(30deg)"></div>
<svg class="a" style="left:26px;top:563.5px" width="9" height="9" viewBox="0 0 10 10"><polygon points="5,0.3 6.5,3.5 9.8,3.8 7.3,6.1 8.1,9.6 5,7.8 1.9,9.6 2.7,6.1 0.2,3.8 3.5,3.5" fill="#f6f000" stroke="#553" stroke-width="0.7"/></svg>
<div class="a" style="left:38px;top:566px;width:1px;height:5px;background:#999;transform:rotate(30deg)"></div>
<svg class="a" style="left:44px;top:563.5px" width="9" height="9" viewBox="0 0 10 10"><polygon points="5,0.3 6.5,3.5 9.8,3.8 7.3,6.1 8.1,9.6 5,7.8 1.9,9.6 2.7,6.1 0.2,3.8 3.5,3.5" fill="#555" stroke="#222" stroke-width="0.7"/></svg>
<div class="a" style="left:55.5px;top:563px;width:9px;height:9px;background:#e8e8c0;border-left:2px solid #2a8a2a;border-right:2px solid #2a8a2a"></div>
<div class="a" style="left:68px;top:565.5px;width:7px;height:4.5px;border-radius:50%;background:#444"></div>
</div>
<div class="a" style="left:772px;top:394px;width:28px;height:138.5px;background:#fffdf0;border-radius:3px 0 0 3px">
<div class="a mono" style="left:0;top:2.0px;width:28px;text-align:center;font-size:8px;line-height:7px;font-weight:bold;letter-spacing:-1.35px;color:#000">44º</div>
<svg class="a" style="left:0;top:9.0px" width="28" height="13" viewBox="0 0 28 13"><path d="M4.3 12 A9.5 9.5 0 0 1 13.8 2.5" fill="none" stroke="#74dc74" stroke-width="0.9"/><path d="M13.8 2.5 A9.5 9.5 0 0 1 23.3 12" fill="none" stroke="#f07878" stroke-width="0.9"/><path d="M12 3.5 L14.6 11.5" stroke="#333" stroke-width="0.8"/></svg>
<div class="a mono" style="left:0;top:21.5px;width:28px;text-align:center;font-size:5.6px;line-height:5px;font-weight:bold;letter-spacing:-1.05px;color:#111">M/B TEMP</div>
<div class="a" style="left:0;top:27.2px;width:28px;height:1px;background:#d8d8d0"></div>
<div class="a mono" style="left:0;top:29.7px;width:28px;text-align:center;font-size:8px;line-height:7px;font-weight:bold;letter-spacing:-1.35px;color:#000">3276 RPM</div>
<svg class="a" style="left:0;top:36.7px" width="28" height="13" viewBox="0 0 28 13"><path d="M4.3 12 A9.5 9.5 0 0 1 13.8 2.5" fill="none" stroke="#f07878" stroke-width="0.9"/><path d="M13.8 2.5 A9.5 9.5 0 0 1 23.3 12" fill="none" stroke="#74dc74" stroke-width="0.9"/><path d="M12 3.5 L14.6 11.5" stroke="#333" stroke-width="0.8"/></svg>
<div class="a mono" style="left:0;top:49.2px;width:28px;text-align:center;font-size:5.6px;line-height:5px;font-weight:bold;letter-spacing:-1.05px;color:#111">CPU FAN</div>
<div class="a" style="left:0;top:54.9px;width:28px;height:1px;background:#d8d8d0"></div>
<div class="a mono" style="left:0;top:57.4px;width:28px;text-align:center;font-size:8px;line-height:7px;font-weight:bold;letter-spacing:-1.35px;color:#000">41º</div>
<svg class="a" style="left:0;top:64.4px" width="28" height="13" viewBox="0 0 28 13"><path d="M4.3 12 A9.5 9.5 0 0 1 13.8 2.5" fill="none" stroke="#74dc74" stroke-width="0.9"/><path d="M13.8 2.5 A9.5 9.5 0 0 1 23.3 12" fill="none" stroke="#f07878" stroke-width="0.9"/><path d="M12 3.5 L14.6 11.5" stroke="#333" stroke-width="0.8"/></svg>
<div class="a mono" style="left:0;top:76.9px;width:28px;text-align:center;font-size:5.6px;line-height:5px;font-weight:bold;letter-spacing:-1.05px;color:#111">CPU TEMP</div>
<div class="a" style="left:0;top:82.6px;width:28px;height:1px;background:#d8d8d0"></div>
<div class="a mono" style="left:0;top:85.1px;width:28px;text-align:center;font-size:8px;line-height:7px;font-weight:bold;letter-spacing:-1.35px;color:#000">98 M</div>
<svg class="a" style="left:0;top:92.1px" width="28" height="13" viewBox="0 0 28 13"><path d="M4.3 12 A9.5 9.5 0 0 1 13.8 2.5" fill="none" stroke="#f07878" stroke-width="0.9"/><path d="M13.8 2.5 A9.5 9.5 0 0 1 23.3 12" fill="none" stroke="#6aa89a" stroke-width="0.9"/><path d="M12 3.5 L14.6 11.5" stroke="#333" stroke-width="0.8"/></svg>
<div class="a mono" style="left:0;top:104.6px;width:28px;text-align:center;font-size:5.6px;line-height:5px;font-weight:bold;letter-spacing:-1.05px;color:#111">RAM 1008M</div>
<div class="a" style="left:0;top:110.3px;width:28px;height:1px;background:#d8d8d0"></div>
<div class="a mono" style="left:0;top:112.8px;width:28px;text-align:center;font-size:8px;line-height:7px;font-weight:bold;letter-spacing:-1.35px;color:#000">34M</div>
<svg class="a" style="left:0;top:119.8px" width="28" height="13" viewBox="0 0 28 13"><path d="M4.3 12 A9.5 9.5 0 0 1 13.8 2.5" fill="none" stroke="#6aa89a" stroke-width="0.9"/><path d="M13.8 2.5 A9.5 9.5 0 0 1 23.3 12" fill="none" stroke="#6aa89a" stroke-width="0.9"/><path d="M12 3.5 L14.6 11.5" stroke="#333" stroke-width="0.8"/></svg>
<div class="a mono" style="left:0;top:132.3px;width:28px;text-align:center;font-size:5.6px;line-height:5px;font-weight:bold;letter-spacing:-1.05px;color:#111">SWP 1GBM</div>
</div>
</div></body></html>
